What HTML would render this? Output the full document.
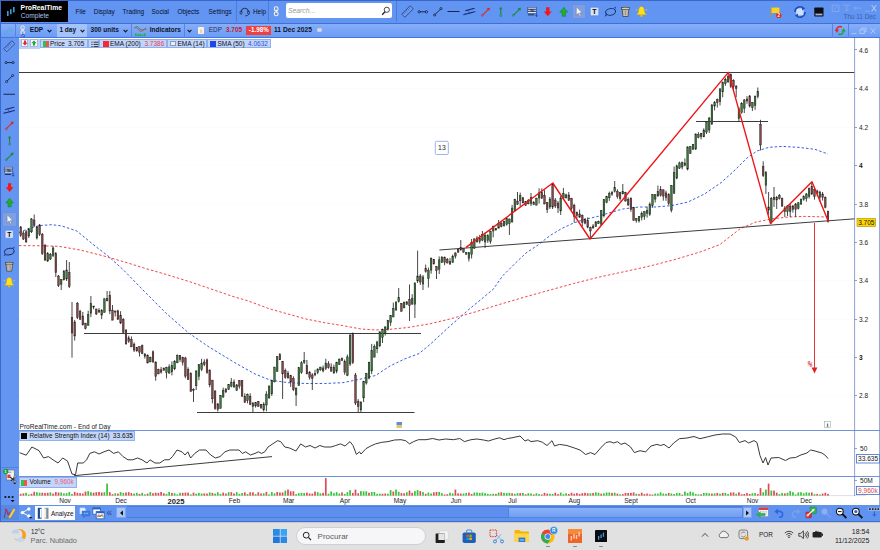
<!DOCTYPE html>
<html><head><meta charset="utf-8"><title>ProRealTime</title>
<style>
html,body{margin:0;padding:0;}
body{width:880px;height:550px;overflow:hidden;background:#fff;font-family:"Liberation Sans",sans-serif;position:relative;}
.abs{position:absolute;}
.t{position:absolute;white-space:nowrap;line-height:1;}
#menubar{left:0;top:0;width:880px;height:22.5px;background:#6294f2;}
#menubar .m{font-size:6.4px;color:#07102a;top:8.5px;}
#row2{left:0;top:22.5px;width:880px;height:15.5px;background:linear-gradient(#86aefa,#6c9cf4);border-top:1px solid #426fd4;border-bottom:1px solid #4674d8;box-sizing:border-box;}
#row2 .b{font-size:6.5px;font-weight:bold;color:#0c1428;top:3.2px;}
#side{left:0;top:38px;width:18.5px;height:468px;background:#6496f1;}
#legend{left:19px;top:38.5px;height:10.5px;}
.lg{position:absolute;top:0;height:9.6px;background:#c3d6fa;border:0.6px solid #8fb0f0;box-sizing:border-box;font-size:6.5px;color:#111;}
#bottombar{left:0;top:505px;width:880px;height:16.5px;background:#6093f0;border-bottom:1.5px solid #3f6fd0;box-sizing:border-box;}
#taskbar{left:0;top:521.5px;width:880px;height:28.5px;background:#e1e1e2;}
</style></head><body>

<svg id="chart" width="880" height="550" viewBox="0 0 880 550" style="position:absolute;left:0;top:0" font-family="Liberation Sans, sans-serif">
<!-- faint grid -->
<g stroke="#fcfcfe" stroke-width="1">
<line x1="19" y1="49.5" x2="854" y2="49.5"/><line x1="19" y1="88.5" x2="854" y2="88.5"/><line x1="19" y1="127.5" x2="854" y2="127.5"/>
<line x1="19" y1="165.5" x2="854" y2="165.5"/><line x1="19" y1="204.5" x2="854" y2="204.5"/><line x1="19" y1="242.5" x2="854" y2="242.5"/>
<line x1="19" y1="280.5" x2="854" y2="280.5"/><line x1="19" y1="319.5" x2="854" y2="319.5"/><line x1="19" y1="357.5" x2="854" y2="357.5"/><line x1="19" y1="395.5" x2="854" y2="395.5"/>
</g>
<!-- moving averages -->
<polyline points="19.0,232.5 30.0,228.0 40.0,225.5 52.0,224.7 62.0,226.0 76.8,231.0 95.0,246.0 107.7,255.6 123.0,269.5 143.0,290.0 165.8,313.0 188.7,333.0 209.0,347.0 234.5,362.5 255.0,374.0 270.0,380.0 288.0,382.7 306.0,383.5 324.5,383.5 342.7,382.7 361.0,379.0 375.5,375.5 390.0,366.0 404.5,359.0 419.0,353.6 430.0,344.5 450.0,326.0 470.0,308.5 493.0,289.5 502.7,275.8 514.5,264.0 526.0,253.0 538.0,245.0 550.0,235.6 561.7,228.5 573.6,223.0 585.0,219.3 599.5,216.0 606.0,213.8 622.7,209.0 639.0,207.0 655.0,207.0 671.8,205.6 688.0,202.0 704.5,194.0 721.0,182.7 734.0,171.0 747.0,158.0 757.0,151.0 769.0,147.3 782.5,146.4 799.0,147.4 815.0,149.3 828.0,154.0" fill="none" stroke="#3a5fe0" stroke-width="1" stroke-dasharray="2.5,2"/>
<polyline points="19.0,245.6 40.0,245.8 58.7,246.3 80.0,250.0 102.0,255.5 123.0,261.5 146.0,268.6 168.0,275.0 189.7,281.7 214.0,290.0 233.0,296.5 247.0,300.5 270.0,309.0 288.0,314.0 306.0,319.0 324.5,322.7 342.7,325.6 361.0,329.0 375.5,330.0 390.0,329.3 408.0,327.5 430.0,323.8 450.0,319.0 475.0,312.0 500.0,304.3 525.0,297.0 552.0,289.5 573.6,283.5 599.5,277.0 625.0,271.5 650.0,266.0 675.0,259.5 700.0,252.0 720.0,244.5 740.0,228.8 756.0,222.0 772.7,218.7 789.0,217.0 805.0,216.4 828.0,217.0" fill="none" stroke="#f04848" stroke-width="1" stroke-dasharray="2.5,2"/>
<!-- horizontal lines -->
<g stroke="#3c3c3c" stroke-width="1">
<line x1="19" y1="72.5" x2="854.5" y2="72.5"/>
<line x1="84" y1="333.5" x2="421" y2="333.5"/>
<line x1="197" y1="412.5" x2="414.5" y2="412.5"/>
<line x1="696" y1="121.5" x2="768" y2="121.5"/>
<line x1="439.4" y1="250" x2="855" y2="218.8"/>
<line x1="73.9" y1="475.7" x2="272" y2="456.6"/>
</g>
<!-- candles -->
<line x1="20.7" y1="226.0" x2="20.7" y2="237.0" stroke="#333" stroke-width="0.9"/>
<rect x="19.90" y="227.0" width="1.6" height="8.5" fill="#8a4545" stroke="#1a1a1a" stroke-width="0.45"/>
<line x1="23.4" y1="231.0" x2="23.4" y2="240.0" stroke="#333" stroke-width="0.9"/>
<rect x="22.60" y="233.0" width="1.6" height="6.0" fill="#8a4545" stroke="#1a1a1a" stroke-width="0.45"/>
<line x1="26.1" y1="230.0" x2="26.1" y2="243.0" stroke="#333" stroke-width="0.9"/>
<rect x="25.30" y="231.8" width="1.6" height="10.0" fill="#8a4545" stroke="#1a1a1a" stroke-width="0.45"/>
<line x1="28.8" y1="228.0" x2="28.8" y2="238.0" stroke="#333" stroke-width="0.9"/>
<rect x="28.00" y="229.0" width="1.6" height="7.0" fill="#3a7a3a" stroke="#1a1a1a" stroke-width="0.45"/>
<line x1="31.5" y1="218.0" x2="31.5" y2="233.0" stroke="#333" stroke-width="0.9"/>
<rect x="30.70" y="219.0" width="1.6" height="12.8" fill="#3a7a3a" stroke="#1a1a1a" stroke-width="0.45"/>
<line x1="34.2" y1="214.5" x2="34.2" y2="227.0" stroke="#333" stroke-width="0.9"/>
<rect x="33.40" y="220.0" width="1.6" height="5.5" fill="#8a4545" stroke="#1a1a1a" stroke-width="0.45"/>
<line x1="36.9" y1="226.0" x2="36.9" y2="239.5" stroke="#333" stroke-width="0.9"/>
<rect x="36.10" y="227.0" width="1.6" height="11.0" fill="#3a7a3a" stroke="#1a1a1a" stroke-width="0.45"/>
<line x1="39.6" y1="224.0" x2="39.6" y2="236.0" stroke="#333" stroke-width="0.9"/>
<rect x="38.80" y="225.0" width="1.6" height="9.5" fill="#8a4545" stroke="#1a1a1a" stroke-width="0.45"/>
<line x1="42.3" y1="233.0" x2="42.3" y2="255.0" stroke="#333" stroke-width="0.9"/>
<rect x="41.50" y="234.5" width="1.6" height="19.1" fill="#8a4545" stroke="#1a1a1a" stroke-width="0.45"/>
<line x1="45.0" y1="244.0" x2="45.0" y2="261.0" stroke="#333" stroke-width="0.9"/>
<rect x="44.20" y="245.5" width="1.6" height="14.5" fill="#8a4545" stroke="#1a1a1a" stroke-width="0.45"/>
<line x1="47.7" y1="252.0" x2="47.7" y2="262.0" stroke="#333" stroke-width="0.9"/>
<rect x="46.90" y="253.6" width="1.6" height="7.4" fill="#3a7a3a" stroke="#1a1a1a" stroke-width="0.45"/>
<line x1="50.4" y1="253.0" x2="50.4" y2="260.0" stroke="#333" stroke-width="0.9"/>
<rect x="49.60" y="254.5" width="1.6" height="4.5" fill="#3a7a3a" stroke="#1a1a1a" stroke-width="0.45"/>
<line x1="53.1" y1="246.0" x2="53.1" y2="257.0" stroke="#333" stroke-width="0.9"/>
<rect x="52.30" y="248.0" width="1.6" height="7.5" fill="#3a7a3a" stroke="#1a1a1a" stroke-width="0.45"/>
<line x1="55.8" y1="252.0" x2="55.8" y2="277.0" stroke="#333" stroke-width="0.9"/>
<rect x="55.00" y="253.6" width="1.6" height="19.1" fill="#8a4545" stroke="#1a1a1a" stroke-width="0.45"/>
<line x1="58.5" y1="275.0" x2="58.5" y2="287.0" stroke="#333" stroke-width="0.9"/>
<rect x="57.70" y="276.0" width="1.6" height="9.5" fill="#8a4545" stroke="#1a1a1a" stroke-width="0.45"/>
<line x1="61.2" y1="279.4" x2="61.2" y2="290.0" stroke="#333" stroke-width="0.9"/>
<rect x="60.40" y="279.4" width="1.6" height="4.9" fill="#3a7a3a" stroke="#1a1a1a" stroke-width="0.45"/>
<line x1="63.9" y1="270.0" x2="63.9" y2="280.1" stroke="#333" stroke-width="0.9"/>
<rect x="63.10" y="271.1" width="1.6" height="8.9" fill="#3a7a3a" stroke="#1a1a1a" stroke-width="0.45"/>
<line x1="66.6" y1="260.0" x2="66.6" y2="281.0" stroke="#333" stroke-width="0.9"/>
<rect x="65.80" y="270.0" width="1.6" height="9.0" fill="#3a7a3a" stroke="#1a1a1a" stroke-width="0.45"/>
<line x1="69.3" y1="262.0" x2="69.3" y2="288.0" stroke="#333" stroke-width="0.9"/>
<rect x="68.50" y="272.6" width="1.6" height="13.9" fill="#8a4545" stroke="#1a1a1a" stroke-width="0.45"/>
<line x1="72.0" y1="302.0" x2="72.0" y2="357.6" stroke="#333" stroke-width="0.9"/>
<rect x="71.20" y="317.4" width="1.6" height="15.6" fill="#8a4545" stroke="#1a1a1a" stroke-width="0.45"/>
<line x1="74.7" y1="320.0" x2="74.7" y2="340.6" stroke="#333" stroke-width="0.9"/>
<rect x="73.90" y="322.0" width="1.6" height="14.0" fill="#8a4545" stroke="#1a1a1a" stroke-width="0.45"/>
<line x1="77.4" y1="302.0" x2="77.4" y2="319.0" stroke="#333" stroke-width="0.9"/>
<rect x="76.60" y="303.5" width="1.6" height="13.9" fill="#8a4545" stroke="#1a1a1a" stroke-width="0.45"/>
<line x1="80.1" y1="309.8" x2="80.1" y2="319.5" stroke="#333" stroke-width="0.9"/>
<rect x="79.30" y="311.2" width="1.6" height="8.2" fill="#8a4545" stroke="#1a1a1a" stroke-width="0.45"/>
<line x1="82.8" y1="311.9" x2="82.8" y2="325.5" stroke="#333" stroke-width="0.9"/>
<rect x="82.00" y="316.0" width="1.6" height="8.8" fill="#8a4545" stroke="#1a1a1a" stroke-width="0.45"/>
<line x1="85.5" y1="323.0" x2="85.5" y2="329.4" stroke="#333" stroke-width="0.9"/>
<rect x="84.70" y="323.1" width="1.6" height="5.2" fill="#8a4545" stroke="#1a1a1a" stroke-width="0.45"/>
<line x1="88.2" y1="310.7" x2="88.2" y2="325.4" stroke="#333" stroke-width="0.9"/>
<rect x="87.40" y="314.6" width="1.6" height="10.7" fill="#3a7a3a" stroke="#1a1a1a" stroke-width="0.45"/>
<line x1="90.9" y1="296.0" x2="90.9" y2="317.1" stroke="#333" stroke-width="0.9"/>
<rect x="90.10" y="303.6" width="1.6" height="9.6" fill="#3a7a3a" stroke="#1a1a1a" stroke-width="0.45"/>
<line x1="93.6" y1="305.8" x2="93.6" y2="309.3" stroke="#333" stroke-width="0.9"/>
<rect x="92.80" y="306.0" width="1.6" height="1.1" fill="#3a7a3a" stroke="#1a1a1a" stroke-width="0.45"/>
<line x1="96.3" y1="308.7" x2="96.3" y2="315.0" stroke="#333" stroke-width="0.9"/>
<rect x="95.50" y="309.0" width="1.6" height="5.0" fill="#8a4545" stroke="#1a1a1a" stroke-width="0.45"/>
<line x1="99.0" y1="308.0" x2="99.0" y2="312.6" stroke="#333" stroke-width="0.9"/>
<rect x="98.20" y="310.5" width="1.6" height="1.6" fill="#8a4545" stroke="#1a1a1a" stroke-width="0.45"/>
<line x1="101.7" y1="309.1" x2="101.7" y2="319.1" stroke="#333" stroke-width="0.9"/>
<rect x="100.90" y="310.2" width="1.6" height="4.9" fill="#3a7a3a" stroke="#1a1a1a" stroke-width="0.45"/>
<line x1="104.4" y1="298.3" x2="104.4" y2="312.5" stroke="#333" stroke-width="0.9"/>
<rect x="103.60" y="298.8" width="1.6" height="13.5" fill="#3a7a3a" stroke="#1a1a1a" stroke-width="0.45"/>
<line x1="107.1" y1="291.0" x2="107.1" y2="301.4" stroke="#333" stroke-width="0.9"/>
<rect x="106.30" y="298.5" width="1.6" height="2.3" fill="#3a7a3a" stroke="#1a1a1a" stroke-width="0.45"/>
<line x1="109.8" y1="291.0" x2="109.8" y2="314.1" stroke="#333" stroke-width="0.9"/>
<rect x="109.00" y="295.2" width="1.6" height="15.8" fill="#8a4545" stroke="#1a1a1a" stroke-width="0.45"/>
<line x1="112.5" y1="305.0" x2="112.5" y2="320.3" stroke="#333" stroke-width="0.9"/>
<rect x="111.70" y="310.1" width="1.6" height="10.0" fill="#8a4545" stroke="#1a1a1a" stroke-width="0.45"/>
<line x1="115.2" y1="310.7" x2="115.2" y2="316.5" stroke="#333" stroke-width="0.9"/>
<rect x="114.40" y="311.0" width="1.6" height="1.1" fill="#8a4545" stroke="#1a1a1a" stroke-width="0.45"/>
<line x1="117.9" y1="309.8" x2="117.9" y2="320.0" stroke="#333" stroke-width="0.9"/>
<rect x="117.10" y="310.8" width="1.6" height="8.4" fill="#8a4545" stroke="#1a1a1a" stroke-width="0.45"/>
<line x1="120.6" y1="311.2" x2="120.6" y2="324.1" stroke="#333" stroke-width="0.9"/>
<rect x="119.80" y="315.2" width="1.6" height="7.8" fill="#8a4545" stroke="#1a1a1a" stroke-width="0.45"/>
<line x1="123.3" y1="318.1" x2="123.3" y2="333.2" stroke="#333" stroke-width="0.9"/>
<rect x="122.50" y="319.5" width="1.6" height="12.7" fill="#8a4545" stroke="#1a1a1a" stroke-width="0.45"/>
<line x1="126.0" y1="329.3" x2="126.0" y2="344.4" stroke="#333" stroke-width="0.9"/>
<rect x="125.20" y="330.0" width="1.6" height="14.0" fill="#8a4545" stroke="#1a1a1a" stroke-width="0.45"/>
<line x1="128.7" y1="335.7" x2="128.7" y2="342.8" stroke="#333" stroke-width="0.9"/>
<rect x="127.90" y="337.8" width="1.6" height="3.7" fill="#8a4545" stroke="#1a1a1a" stroke-width="0.45"/>
<line x1="131.4" y1="336.4" x2="131.4" y2="347.2" stroke="#333" stroke-width="0.9"/>
<rect x="130.60" y="339.5" width="1.6" height="7.3" fill="#8a4545" stroke="#1a1a1a" stroke-width="0.45"/>
<line x1="134.1" y1="342.4" x2="134.1" y2="352.0" stroke="#333" stroke-width="0.9"/>
<rect x="133.30" y="344.1" width="1.6" height="5.9" fill="#8a4545" stroke="#1a1a1a" stroke-width="0.45"/>
<line x1="136.8" y1="347.2" x2="136.8" y2="351.7" stroke="#333" stroke-width="0.9"/>
<rect x="136.00" y="347.2" width="1.6" height="3.7" fill="#8a4545" stroke="#1a1a1a" stroke-width="0.45"/>
<line x1="139.5" y1="346.4" x2="139.5" y2="356.5" stroke="#333" stroke-width="0.9"/>
<rect x="138.70" y="346.7" width="1.6" height="5.4" fill="#8a4545" stroke="#1a1a1a" stroke-width="0.45"/>
<line x1="142.2" y1="344.5" x2="142.2" y2="354.2" stroke="#333" stroke-width="0.9"/>
<rect x="141.40" y="345.7" width="1.6" height="8.0" fill="#8a4545" stroke="#1a1a1a" stroke-width="0.45"/>
<line x1="144.9" y1="353.7" x2="144.9" y2="358.6" stroke="#333" stroke-width="0.9"/>
<rect x="144.10" y="353.8" width="1.6" height="2.4" fill="#3a7a3a" stroke="#1a1a1a" stroke-width="0.45"/>
<line x1="147.6" y1="354.5" x2="147.6" y2="363.2" stroke="#333" stroke-width="0.9"/>
<rect x="146.80" y="355.1" width="1.6" height="7.9" fill="#8a4545" stroke="#1a1a1a" stroke-width="0.45"/>
<line x1="150.3" y1="356.6" x2="150.3" y2="362.2" stroke="#333" stroke-width="0.9"/>
<rect x="149.50" y="357.4" width="1.6" height="4.5" fill="#3a7a3a" stroke="#1a1a1a" stroke-width="0.45"/>
<line x1="153.0" y1="350.4" x2="153.0" y2="362.3" stroke="#333" stroke-width="0.9"/>
<rect x="152.20" y="351.8" width="1.6" height="10.3" fill="#8a4545" stroke="#1a1a1a" stroke-width="0.45"/>
<line x1="155.7" y1="361.8" x2="155.7" y2="380.7" stroke="#333" stroke-width="0.9"/>
<rect x="154.90" y="361.9" width="1.6" height="14.4" fill="#8a4545" stroke="#1a1a1a" stroke-width="0.45"/>
<line x1="158.4" y1="368.7" x2="158.4" y2="374.2" stroke="#333" stroke-width="0.9"/>
<rect x="157.60" y="369.5" width="1.6" height="4.4" fill="#8a4545" stroke="#1a1a1a" stroke-width="0.45"/>
<line x1="161.1" y1="366.9" x2="161.1" y2="373.6" stroke="#333" stroke-width="0.9"/>
<rect x="160.30" y="369.8" width="1.6" height="2.3" fill="#8a4545" stroke="#1a1a1a" stroke-width="0.45"/>
<line x1="163.8" y1="367.8" x2="163.8" y2="370.5" stroke="#333" stroke-width="0.9"/>
<rect x="163.00" y="368.0" width="1.6" height="2.4" fill="#8a4545" stroke="#1a1a1a" stroke-width="0.45"/>
<line x1="166.5" y1="366.7" x2="166.5" y2="378.4" stroke="#333" stroke-width="0.9"/>
<rect x="165.70" y="367.5" width="1.6" height="4.8" fill="#3a7a3a" stroke="#1a1a1a" stroke-width="0.45"/>
<line x1="169.2" y1="364.3" x2="169.2" y2="373.6" stroke="#333" stroke-width="0.9"/>
<rect x="168.40" y="366.9" width="1.6" height="6.2" fill="#3a7a3a" stroke="#1a1a1a" stroke-width="0.45"/>
<line x1="171.9" y1="361.4" x2="171.9" y2="375.4" stroke="#333" stroke-width="0.9"/>
<rect x="171.10" y="365.7" width="1.6" height="6.2" fill="#3a7a3a" stroke="#1a1a1a" stroke-width="0.45"/>
<line x1="174.6" y1="360.1" x2="174.6" y2="370.2" stroke="#333" stroke-width="0.9"/>
<rect x="173.80" y="361.5" width="1.6" height="7.3" fill="#3a7a3a" stroke="#1a1a1a" stroke-width="0.45"/>
<line x1="177.3" y1="354.5" x2="177.3" y2="363.2" stroke="#333" stroke-width="0.9"/>
<rect x="176.50" y="355.2" width="1.6" height="7.6" fill="#3a7a3a" stroke="#1a1a1a" stroke-width="0.45"/>
<line x1="180.0" y1="355.1" x2="180.0" y2="361.9" stroke="#333" stroke-width="0.9"/>
<rect x="179.20" y="355.4" width="1.6" height="4.1" fill="#8a4545" stroke="#1a1a1a" stroke-width="0.45"/>
<line x1="182.7" y1="357.0" x2="182.7" y2="365.5" stroke="#333" stroke-width="0.9"/>
<rect x="181.90" y="357.1" width="1.6" height="5.3" fill="#8a4545" stroke="#1a1a1a" stroke-width="0.45"/>
<line x1="185.4" y1="356.8" x2="185.4" y2="378.3" stroke="#333" stroke-width="0.9"/>
<rect x="184.60" y="358.0" width="1.6" height="18.1" fill="#8a4545" stroke="#1a1a1a" stroke-width="0.45"/>
<line x1="188.1" y1="367.3" x2="188.1" y2="379.7" stroke="#333" stroke-width="0.9"/>
<rect x="187.30" y="369.7" width="1.6" height="9.9" fill="#8a4545" stroke="#1a1a1a" stroke-width="0.45"/>
<line x1="190.8" y1="372.3" x2="190.8" y2="391.6" stroke="#333" stroke-width="0.9"/>
<rect x="190.00" y="373.3" width="1.6" height="18.3" fill="#8a4545" stroke="#1a1a1a" stroke-width="0.45"/>
<line x1="193.5" y1="388.3" x2="193.5" y2="402.0" stroke="#333" stroke-width="0.9"/>
<rect x="192.70" y="389.3" width="1.6" height="1.0" fill="#8a4545" stroke="#1a1a1a" stroke-width="0.45"/>
<line x1="196.2" y1="370.2" x2="196.2" y2="390.0" stroke="#333" stroke-width="0.9"/>
<rect x="195.40" y="371.0" width="1.6" height="14.8" fill="#3a7a3a" stroke="#1a1a1a" stroke-width="0.45"/>
<line x1="198.9" y1="364.3" x2="198.9" y2="380.2" stroke="#333" stroke-width="0.9"/>
<rect x="198.10" y="364.4" width="1.6" height="12.1" fill="#3a7a3a" stroke="#1a1a1a" stroke-width="0.45"/>
<line x1="201.6" y1="358.8" x2="201.6" y2="371.1" stroke="#333" stroke-width="0.9"/>
<rect x="200.80" y="363.1" width="1.6" height="6.5" fill="#3a7a3a" stroke="#1a1a1a" stroke-width="0.45"/>
<line x1="204.3" y1="359.3" x2="204.3" y2="366.3" stroke="#333" stroke-width="0.9"/>
<rect x="203.50" y="362.0" width="1.6" height="2.4" fill="#8a4545" stroke="#1a1a1a" stroke-width="0.45"/>
<line x1="207.0" y1="358.5" x2="207.0" y2="373.8" stroke="#333" stroke-width="0.9"/>
<rect x="206.20" y="359.9" width="1.6" height="12.6" fill="#8a4545" stroke="#1a1a1a" stroke-width="0.45"/>
<line x1="209.7" y1="369.6" x2="209.7" y2="387.3" stroke="#333" stroke-width="0.9"/>
<rect x="208.90" y="370.0" width="1.6" height="14.8" fill="#8a4545" stroke="#1a1a1a" stroke-width="0.45"/>
<line x1="212.4" y1="380.0" x2="212.4" y2="403.3" stroke="#333" stroke-width="0.9"/>
<rect x="211.60" y="380.1" width="1.6" height="18.7" fill="#8a4545" stroke="#1a1a1a" stroke-width="0.45"/>
<line x1="215.1" y1="390.5" x2="215.1" y2="409.8" stroke="#333" stroke-width="0.9"/>
<rect x="214.30" y="390.9" width="1.6" height="17.5" fill="#8a4545" stroke="#1a1a1a" stroke-width="0.45"/>
<line x1="217.8" y1="403.3" x2="217.8" y2="411.6" stroke="#333" stroke-width="0.9"/>
<rect x="217.00" y="403.8" width="1.6" height="5.5" fill="#8a4545" stroke="#1a1a1a" stroke-width="0.45"/>
<line x1="220.5" y1="395.0" x2="220.5" y2="408.5" stroke="#333" stroke-width="0.9"/>
<rect x="219.70" y="395.6" width="1.6" height="12.7" fill="#3a7a3a" stroke="#1a1a1a" stroke-width="0.45"/>
<line x1="223.2" y1="387.6" x2="223.2" y2="397.5" stroke="#333" stroke-width="0.9"/>
<rect x="222.40" y="390.3" width="1.6" height="6.8" fill="#3a7a3a" stroke="#1a1a1a" stroke-width="0.45"/>
<line x1="225.9" y1="388.4" x2="225.9" y2="393.1" stroke="#333" stroke-width="0.9"/>
<rect x="225.10" y="388.9" width="1.6" height="3.0" fill="#8a4545" stroke="#1a1a1a" stroke-width="0.45"/>
<line x1="228.6" y1="384.2" x2="228.6" y2="390.0" stroke="#333" stroke-width="0.9"/>
<rect x="227.80" y="384.3" width="1.6" height="5.2" fill="#3a7a3a" stroke="#1a1a1a" stroke-width="0.45"/>
<line x1="231.3" y1="378.0" x2="231.3" y2="387.3" stroke="#333" stroke-width="0.9"/>
<rect x="230.50" y="382.1" width="1.6" height="4.1" fill="#3a7a3a" stroke="#1a1a1a" stroke-width="0.45"/>
<line x1="234.0" y1="379.4" x2="234.0" y2="387.7" stroke="#333" stroke-width="0.9"/>
<rect x="233.20" y="382.0" width="1.6" height="5.0" fill="#8a4545" stroke="#1a1a1a" stroke-width="0.45"/>
<line x1="236.7" y1="384.1" x2="236.7" y2="390.9" stroke="#333" stroke-width="0.9"/>
<rect x="235.90" y="384.9" width="1.6" height="5.5" fill="#3a7a3a" stroke="#1a1a1a" stroke-width="0.45"/>
<line x1="239.4" y1="380.0" x2="239.4" y2="388.7" stroke="#333" stroke-width="0.9"/>
<rect x="238.60" y="380.6" width="1.6" height="5.5" fill="#8a4545" stroke="#1a1a1a" stroke-width="0.45"/>
<line x1="242.1" y1="380.0" x2="242.1" y2="396.4" stroke="#333" stroke-width="0.9"/>
<rect x="241.30" y="380.6" width="1.6" height="15.7" fill="#8a4545" stroke="#1a1a1a" stroke-width="0.45"/>
<line x1="244.8" y1="393.3" x2="244.8" y2="402.8" stroke="#333" stroke-width="0.9"/>
<rect x="244.00" y="396.2" width="1.6" height="6.2" fill="#8a4545" stroke="#1a1a1a" stroke-width="0.45"/>
<line x1="247.5" y1="393.5" x2="247.5" y2="403.3" stroke="#333" stroke-width="0.9"/>
<rect x="246.70" y="394.5" width="1.6" height="6.2" fill="#3a7a3a" stroke="#1a1a1a" stroke-width="0.45"/>
<line x1="250.2" y1="393.3" x2="250.2" y2="405.0" stroke="#333" stroke-width="0.9"/>
<rect x="249.40" y="396.2" width="1.6" height="8.3" fill="#8a4545" stroke="#1a1a1a" stroke-width="0.45"/>
<line x1="252.9" y1="402.5" x2="252.9" y2="412.0" stroke="#333" stroke-width="0.9"/>
<rect x="252.10" y="402.9" width="1.6" height="3.8" fill="#8a4545" stroke="#1a1a1a" stroke-width="0.45"/>
<line x1="255.6" y1="402.0" x2="255.6" y2="407.6" stroke="#333" stroke-width="0.9"/>
<rect x="254.80" y="402.7" width="1.6" height="3.2" fill="#3a7a3a" stroke="#1a1a1a" stroke-width="0.45"/>
<line x1="258.3" y1="401.1" x2="258.3" y2="406.8" stroke="#333" stroke-width="0.9"/>
<rect x="257.50" y="401.4" width="1.6" height="5.0" fill="#8a4545" stroke="#1a1a1a" stroke-width="0.45"/>
<line x1="261.0" y1="403.9" x2="261.0" y2="409.0" stroke="#333" stroke-width="0.9"/>
<rect x="260.20" y="404.5" width="1.6" height="3.2" fill="#8a4545" stroke="#1a1a1a" stroke-width="0.45"/>
<line x1="263.7" y1="402.2" x2="263.7" y2="411.6" stroke="#333" stroke-width="0.9"/>
<rect x="262.90" y="404.1" width="1.6" height="5.7" fill="#3a7a3a" stroke="#1a1a1a" stroke-width="0.45"/>
<line x1="266.4" y1="391.2" x2="266.4" y2="411.3" stroke="#333" stroke-width="0.9"/>
<rect x="265.60" y="394.1" width="1.6" height="10.9" fill="#3a7a3a" stroke="#1a1a1a" stroke-width="0.45"/>
<line x1="269.1" y1="385.9" x2="269.1" y2="398.8" stroke="#333" stroke-width="0.9"/>
<rect x="268.30" y="385.9" width="1.6" height="12.0" fill="#3a7a3a" stroke="#1a1a1a" stroke-width="0.45"/>
<line x1="271.8" y1="380.0" x2="271.8" y2="396.0" stroke="#333" stroke-width="0.9"/>
<rect x="271.00" y="380.3" width="1.6" height="13.5" fill="#3a7a3a" stroke="#1a1a1a" stroke-width="0.45"/>
<line x1="274.5" y1="366.9" x2="274.5" y2="382.4" stroke="#333" stroke-width="0.9"/>
<rect x="273.70" y="367.1" width="1.6" height="14.7" fill="#3a7a3a" stroke="#1a1a1a" stroke-width="0.45"/>
<line x1="277.2" y1="356.5" x2="277.2" y2="371.9" stroke="#333" stroke-width="0.9"/>
<rect x="276.40" y="356.5" width="1.6" height="14.8" fill="#3a7a3a" stroke="#1a1a1a" stroke-width="0.45"/>
<line x1="279.9" y1="353.0" x2="279.9" y2="359.8" stroke="#333" stroke-width="0.9"/>
<rect x="279.10" y="354.7" width="1.6" height="5.1" fill="#8a4545" stroke="#1a1a1a" stroke-width="0.45"/>
<line x1="282.6" y1="361.1" x2="282.6" y2="399.0" stroke="#333" stroke-width="0.9"/>
<rect x="281.80" y="361.3" width="1.6" height="12.5" fill="#8a4545" stroke="#1a1a1a" stroke-width="0.45"/>
<line x1="285.3" y1="368.5" x2="285.3" y2="378.8" stroke="#333" stroke-width="0.9"/>
<rect x="284.50" y="370.5" width="1.6" height="6.7" fill="#8a4545" stroke="#1a1a1a" stroke-width="0.45"/>
<line x1="288.0" y1="370.9" x2="288.0" y2="378.6" stroke="#333" stroke-width="0.9"/>
<rect x="287.20" y="373.1" width="1.6" height="4.8" fill="#8a4545" stroke="#1a1a1a" stroke-width="0.45"/>
<line x1="290.7" y1="374.9" x2="290.7" y2="386.9" stroke="#333" stroke-width="0.9"/>
<rect x="289.90" y="375.7" width="1.6" height="6.5" fill="#8a4545" stroke="#1a1a1a" stroke-width="0.45"/>
<line x1="293.4" y1="376.3" x2="293.4" y2="391.1" stroke="#333" stroke-width="0.9"/>
<rect x="292.60" y="378.6" width="1.6" height="11.0" fill="#8a4545" stroke="#1a1a1a" stroke-width="0.45"/>
<line x1="296.1" y1="387.6" x2="296.1" y2="406.0" stroke="#333" stroke-width="0.9"/>
<rect x="295.30" y="388.0" width="1.6" height="6.9" fill="#3a7a3a" stroke="#1a1a1a" stroke-width="0.45"/>
<line x1="298.8" y1="367.4" x2="298.8" y2="385.9" stroke="#333" stroke-width="0.9"/>
<rect x="298.00" y="367.6" width="1.6" height="18.1" fill="#3a7a3a" stroke="#1a1a1a" stroke-width="0.45"/>
<line x1="301.5" y1="361.2" x2="301.5" y2="373.8" stroke="#333" stroke-width="0.9"/>
<rect x="300.70" y="362.8" width="1.6" height="9.5" fill="#3a7a3a" stroke="#1a1a1a" stroke-width="0.45"/>
<line x1="304.2" y1="352.0" x2="304.2" y2="364.0" stroke="#333" stroke-width="0.9"/>
<rect x="303.40" y="360.4" width="1.6" height="2.3" fill="#3a7a3a" stroke="#1a1a1a" stroke-width="0.45"/>
<line x1="306.9" y1="359.9" x2="306.9" y2="374.4" stroke="#333" stroke-width="0.9"/>
<rect x="306.10" y="365.5" width="1.6" height="8.3" fill="#8a4545" stroke="#1a1a1a" stroke-width="0.45"/>
<line x1="309.6" y1="371.1" x2="309.6" y2="379.6" stroke="#333" stroke-width="0.9"/>
<rect x="308.80" y="372.1" width="1.6" height="5.3" fill="#8a4545" stroke="#1a1a1a" stroke-width="0.45"/>
<line x1="312.3" y1="373.2" x2="312.3" y2="390.0" stroke="#333" stroke-width="0.9"/>
<rect x="311.50" y="374.9" width="1.6" height="3.5" fill="#8a4545" stroke="#1a1a1a" stroke-width="0.45"/>
<line x1="315.0" y1="369.8" x2="315.0" y2="376.2" stroke="#333" stroke-width="0.9"/>
<rect x="314.20" y="373.7" width="1.6" height="1.2" fill="#8a4545" stroke="#1a1a1a" stroke-width="0.45"/>
<line x1="317.7" y1="368.5" x2="317.7" y2="374.2" stroke="#333" stroke-width="0.9"/>
<rect x="316.90" y="369.0" width="1.6" height="3.7" fill="#3a7a3a" stroke="#1a1a1a" stroke-width="0.45"/>
<line x1="320.4" y1="366.8" x2="320.4" y2="370.9" stroke="#333" stroke-width="0.9"/>
<rect x="319.60" y="367.1" width="1.6" height="2.7" fill="#3a7a3a" stroke="#1a1a1a" stroke-width="0.45"/>
<line x1="323.1" y1="365.5" x2="323.1" y2="372.3" stroke="#333" stroke-width="0.9"/>
<rect x="322.30" y="368.0" width="1.6" height="2.9" fill="#8a4545" stroke="#1a1a1a" stroke-width="0.45"/>
<line x1="325.8" y1="358.7" x2="325.8" y2="370.1" stroke="#333" stroke-width="0.9"/>
<rect x="325.00" y="363.1" width="1.6" height="5.3" fill="#3a7a3a" stroke="#1a1a1a" stroke-width="0.45"/>
<line x1="328.5" y1="361.2" x2="328.5" y2="368.7" stroke="#333" stroke-width="0.9"/>
<rect x="327.70" y="363.8" width="1.6" height="3.8" fill="#8a4545" stroke="#1a1a1a" stroke-width="0.45"/>
<line x1="331.2" y1="363.3" x2="331.2" y2="371.3" stroke="#333" stroke-width="0.9"/>
<rect x="330.40" y="367.1" width="1.6" height="4.1" fill="#8a4545" stroke="#1a1a1a" stroke-width="0.45"/>
<line x1="333.9" y1="364.6" x2="333.9" y2="373.7" stroke="#333" stroke-width="0.9"/>
<rect x="333.10" y="367.1" width="1.6" height="5.9" fill="#3a7a3a" stroke="#1a1a1a" stroke-width="0.45"/>
<line x1="336.6" y1="361.9" x2="336.6" y2="373.3" stroke="#333" stroke-width="0.9"/>
<rect x="335.80" y="362.1" width="1.6" height="9.1" fill="#3a7a3a" stroke="#1a1a1a" stroke-width="0.45"/>
<line x1="339.3" y1="358.5" x2="339.3" y2="364.7" stroke="#333" stroke-width="0.9"/>
<rect x="338.50" y="359.1" width="1.6" height="5.6" fill="#3a7a3a" stroke="#1a1a1a" stroke-width="0.45"/>
<line x1="342.0" y1="357.5" x2="342.0" y2="361.1" stroke="#333" stroke-width="0.9"/>
<rect x="341.20" y="358.6" width="1.6" height="1.7" fill="#8a4545" stroke="#1a1a1a" stroke-width="0.45"/>
<line x1="344.7" y1="359.5" x2="344.7" y2="374.8" stroke="#333" stroke-width="0.9"/>
<rect x="343.90" y="361.3" width="1.6" height="11.0" fill="#8a4545" stroke="#1a1a1a" stroke-width="0.45"/>
<line x1="347.4" y1="354.5" x2="347.4" y2="376.1" stroke="#333" stroke-width="0.9"/>
<rect x="346.60" y="356.9" width="1.6" height="18.7" fill="#3a7a3a" stroke="#1a1a1a" stroke-width="0.45"/>
<line x1="350.1" y1="334.0" x2="350.1" y2="366.0" stroke="#333" stroke-width="0.9"/>
<rect x="349.30" y="335.5" width="1.6" height="28.5" fill="#3a7a3a" stroke="#1a1a1a" stroke-width="0.45"/>
<line x1="352.8" y1="332.5" x2="352.8" y2="364.0" stroke="#333" stroke-width="0.9"/>
<rect x="352.00" y="333.6" width="1.6" height="29.1" fill="#8a4545" stroke="#1a1a1a" stroke-width="0.45"/>
<line x1="355.5" y1="373.0" x2="355.5" y2="405.0" stroke="#333" stroke-width="0.9"/>
<rect x="354.70" y="375.0" width="1.6" height="28.0" fill="#8a4545" stroke="#1a1a1a" stroke-width="0.45"/>
<line x1="358.2" y1="399.1" x2="358.2" y2="412.5" stroke="#333" stroke-width="0.9"/>
<rect x="357.40" y="401.5" width="1.6" height="5.2" fill="#8a4545" stroke="#1a1a1a" stroke-width="0.45"/>
<line x1="360.9" y1="401.7" x2="360.9" y2="412.0" stroke="#333" stroke-width="0.9"/>
<rect x="360.10" y="401.9" width="1.6" height="8.0" fill="#3a7a3a" stroke="#1a1a1a" stroke-width="0.45"/>
<line x1="363.6" y1="381.1" x2="363.6" y2="402.1" stroke="#333" stroke-width="0.9"/>
<rect x="362.80" y="381.1" width="1.6" height="16.8" fill="#3a7a3a" stroke="#1a1a1a" stroke-width="0.45"/>
<line x1="366.3" y1="372.9" x2="366.3" y2="384.6" stroke="#333" stroke-width="0.9"/>
<rect x="365.50" y="373.4" width="1.6" height="9.6" fill="#3a7a3a" stroke="#1a1a1a" stroke-width="0.45"/>
<line x1="369.0" y1="361.7" x2="369.0" y2="379.3" stroke="#333" stroke-width="0.9"/>
<rect x="368.20" y="362.3" width="1.6" height="15.8" fill="#3a7a3a" stroke="#1a1a1a" stroke-width="0.45"/>
<line x1="371.7" y1="343.9" x2="371.7" y2="374.1" stroke="#333" stroke-width="0.9"/>
<rect x="370.90" y="350.3" width="1.6" height="20.6" fill="#3a7a3a" stroke="#1a1a1a" stroke-width="0.45"/>
<line x1="374.4" y1="344.4" x2="374.4" y2="357.4" stroke="#333" stroke-width="0.9"/>
<rect x="373.60" y="346.4" width="1.6" height="10.7" fill="#3a7a3a" stroke="#1a1a1a" stroke-width="0.45"/>
<line x1="377.1" y1="340.8" x2="377.1" y2="353.1" stroke="#333" stroke-width="0.9"/>
<rect x="376.30" y="342.0" width="1.6" height="6.8" fill="#3a7a3a" stroke="#1a1a1a" stroke-width="0.45"/>
<line x1="379.8" y1="331.4" x2="379.8" y2="347.2" stroke="#333" stroke-width="0.9"/>
<rect x="379.00" y="331.8" width="1.6" height="14.0" fill="#3a7a3a" stroke="#1a1a1a" stroke-width="0.45"/>
<line x1="382.5" y1="328.6" x2="382.5" y2="343.0" stroke="#333" stroke-width="0.9"/>
<rect x="381.70" y="329.7" width="1.6" height="7.5" fill="#3a7a3a" stroke="#1a1a1a" stroke-width="0.45"/>
<line x1="385.2" y1="326.1" x2="385.2" y2="335.6" stroke="#333" stroke-width="0.9"/>
<rect x="384.40" y="327.0" width="1.6" height="6.8" fill="#3a7a3a" stroke="#1a1a1a" stroke-width="0.45"/>
<line x1="387.9" y1="320.2" x2="387.9" y2="330.5" stroke="#333" stroke-width="0.9"/>
<rect x="387.10" y="320.2" width="1.6" height="9.0" fill="#3a7a3a" stroke="#1a1a1a" stroke-width="0.45"/>
<line x1="390.6" y1="315.1" x2="390.6" y2="325.8" stroke="#333" stroke-width="0.9"/>
<rect x="389.80" y="315.7" width="1.6" height="7.0" fill="#3a7a3a" stroke="#1a1a1a" stroke-width="0.45"/>
<line x1="393.3" y1="302.6" x2="393.3" y2="317.1" stroke="#333" stroke-width="0.9"/>
<rect x="392.50" y="308.4" width="1.6" height="8.6" fill="#3a7a3a" stroke="#1a1a1a" stroke-width="0.45"/>
<line x1="396.0" y1="301.5" x2="396.0" y2="310.9" stroke="#333" stroke-width="0.9"/>
<rect x="395.20" y="302.0" width="1.6" height="8.0" fill="#3a7a3a" stroke="#1a1a1a" stroke-width="0.45"/>
<line x1="398.7" y1="288.0" x2="398.7" y2="302.6" stroke="#333" stroke-width="0.9"/>
<rect x="397.90" y="297.7" width="1.6" height="4.0" fill="#3a7a3a" stroke="#1a1a1a" stroke-width="0.45"/>
<line x1="401.4" y1="303.1" x2="401.4" y2="311.4" stroke="#333" stroke-width="0.9"/>
<rect x="400.60" y="303.3" width="1.6" height="8.0" fill="#8a4545" stroke="#1a1a1a" stroke-width="0.45"/>
<line x1="404.1" y1="301.7" x2="404.1" y2="308.4" stroke="#333" stroke-width="0.9"/>
<rect x="403.30" y="302.1" width="1.6" height="5.7" fill="#3a7a3a" stroke="#1a1a1a" stroke-width="0.45"/>
<line x1="406.8" y1="301.1" x2="406.8" y2="304.9" stroke="#333" stroke-width="0.9"/>
<rect x="406.00" y="301.9" width="1.6" height="2.5" fill="#3a7a3a" stroke="#1a1a1a" stroke-width="0.45"/>
<line x1="409.5" y1="284.5" x2="409.5" y2="321.0" stroke="#333" stroke-width="0.9"/>
<rect x="408.70" y="299.7" width="1.6" height="6.0" fill="#8a4545" stroke="#1a1a1a" stroke-width="0.45"/>
<line x1="412.2" y1="294.2" x2="412.2" y2="304.7" stroke="#333" stroke-width="0.9"/>
<rect x="411.40" y="298.7" width="1.6" height="5.4" fill="#3a7a3a" stroke="#1a1a1a" stroke-width="0.45"/>
<line x1="414.9" y1="282.0" x2="414.9" y2="318.0" stroke="#333" stroke-width="0.9"/>
<rect x="414.10" y="283.5" width="1.6" height="20.8" fill="#3a7a3a" stroke="#1a1a1a" stroke-width="0.45"/>
<line x1="417.6" y1="250.7" x2="417.6" y2="283.0" stroke="#333" stroke-width="0.9"/>
<rect x="416.80" y="276.0" width="1.6" height="5.0" fill="#3a7a3a" stroke="#1a1a1a" stroke-width="0.45"/>
<line x1="420.3" y1="274.0" x2="420.3" y2="285.0" stroke="#333" stroke-width="0.9"/>
<rect x="419.50" y="276.0" width="1.6" height="6.0" fill="#8a4545" stroke="#1a1a1a" stroke-width="0.45"/>
<line x1="423.0" y1="275.0" x2="423.0" y2="290.0" stroke="#333" stroke-width="0.9"/>
<rect x="422.20" y="277.0" width="1.6" height="7.0" fill="#3a7a3a" stroke="#1a1a1a" stroke-width="0.45"/>
<line x1="425.7" y1="264.6" x2="425.7" y2="272.7" stroke="#333" stroke-width="0.9"/>
<rect x="424.90" y="268.7" width="1.6" height="3.0" fill="#8a4545" stroke="#1a1a1a" stroke-width="0.45"/>
<line x1="428.4" y1="267.5" x2="428.4" y2="287.5" stroke="#333" stroke-width="0.9"/>
<rect x="427.60" y="270.2" width="1.6" height="8.2" fill="#3a7a3a" stroke="#1a1a1a" stroke-width="0.45"/>
<line x1="431.1" y1="257.3" x2="431.1" y2="273.7" stroke="#333" stroke-width="0.9"/>
<rect x="430.30" y="258.3" width="1.6" height="11.8" fill="#3a7a3a" stroke="#1a1a1a" stroke-width="0.45"/>
<line x1="433.8" y1="258.9" x2="433.8" y2="264.7" stroke="#333" stroke-width="0.9"/>
<rect x="433.00" y="259.4" width="1.6" height="4.4" fill="#8a4545" stroke="#1a1a1a" stroke-width="0.45"/>
<line x1="436.5" y1="266.2" x2="436.5" y2="279.0" stroke="#333" stroke-width="0.9"/>
<rect x="435.70" y="266.6" width="1.6" height="4.1" fill="#8a4545" stroke="#1a1a1a" stroke-width="0.45"/>
<line x1="439.2" y1="256.4" x2="439.2" y2="274.0" stroke="#333" stroke-width="0.9"/>
<rect x="438.40" y="259.8" width="1.6" height="9.4" fill="#3a7a3a" stroke="#1a1a1a" stroke-width="0.45"/>
<line x1="441.9" y1="256.2" x2="441.9" y2="263.0" stroke="#333" stroke-width="0.9"/>
<rect x="441.10" y="257.1" width="1.6" height="5.5" fill="#3a7a3a" stroke="#1a1a1a" stroke-width="0.45"/>
<line x1="444.6" y1="256.7" x2="444.6" y2="265.2" stroke="#333" stroke-width="0.9"/>
<rect x="443.80" y="257.1" width="1.6" height="5.3" fill="#8a4545" stroke="#1a1a1a" stroke-width="0.45"/>
<line x1="447.3" y1="258.0" x2="447.3" y2="263.3" stroke="#333" stroke-width="0.9"/>
<rect x="446.50" y="259.4" width="1.6" height="3.6" fill="#8a4545" stroke="#1a1a1a" stroke-width="0.45"/>
<line x1="450.0" y1="257.9" x2="450.0" y2="264.5" stroke="#333" stroke-width="0.9"/>
<rect x="449.20" y="261.6" width="1.6" height="2.5" fill="#8a4545" stroke="#1a1a1a" stroke-width="0.45"/>
<line x1="452.7" y1="254.5" x2="452.7" y2="263.0" stroke="#333" stroke-width="0.9"/>
<rect x="451.90" y="256.3" width="1.6" height="6.2" fill="#3a7a3a" stroke="#1a1a1a" stroke-width="0.45"/>
<line x1="455.4" y1="252.2" x2="455.4" y2="258.5" stroke="#333" stroke-width="0.9"/>
<rect x="454.60" y="253.0" width="1.6" height="3.1" fill="#8a4545" stroke="#1a1a1a" stroke-width="0.45"/>
<line x1="458.1" y1="249.1" x2="458.1" y2="252.9" stroke="#333" stroke-width="0.9"/>
<rect x="457.30" y="249.3" width="1.6" height="2.8" fill="#8a4545" stroke="#1a1a1a" stroke-width="0.45"/>
<line x1="460.8" y1="240.0" x2="460.8" y2="250.2" stroke="#333" stroke-width="0.9"/>
<rect x="460.00" y="247.3" width="1.6" height="2.8" fill="#8a4545" stroke="#1a1a1a" stroke-width="0.45"/>
<line x1="463.5" y1="248.2" x2="463.5" y2="252.6" stroke="#333" stroke-width="0.9"/>
<rect x="462.70" y="248.6" width="1.6" height="3.5" fill="#8a4545" stroke="#1a1a1a" stroke-width="0.45"/>
<line x1="466.2" y1="252.3" x2="466.2" y2="254.6" stroke="#333" stroke-width="0.9"/>
<rect x="465.40" y="252.5" width="1.6" height="1.7" fill="#3a7a3a" stroke="#1a1a1a" stroke-width="0.45"/>
<line x1="468.9" y1="252.4" x2="468.9" y2="261.5" stroke="#333" stroke-width="0.9"/>
<rect x="468.10" y="252.7" width="1.6" height="5.9" fill="#3a7a3a" stroke="#1a1a1a" stroke-width="0.45"/>
<line x1="471.6" y1="239.0" x2="471.6" y2="258.5" stroke="#333" stroke-width="0.9"/>
<rect x="470.80" y="242.3" width="1.6" height="12.2" fill="#3a7a3a" stroke="#1a1a1a" stroke-width="0.45"/>
<line x1="474.3" y1="238.4" x2="474.3" y2="248.8" stroke="#333" stroke-width="0.9"/>
<rect x="473.50" y="238.9" width="1.6" height="9.3" fill="#3a7a3a" stroke="#1a1a1a" stroke-width="0.45"/>
<line x1="477.0" y1="236.1" x2="477.0" y2="242.2" stroke="#333" stroke-width="0.9"/>
<rect x="476.20" y="238.0" width="1.6" height="4.0" fill="#3a7a3a" stroke="#1a1a1a" stroke-width="0.45"/>
<line x1="479.7" y1="234.9" x2="479.7" y2="243.5" stroke="#333" stroke-width="0.9"/>
<rect x="478.90" y="238.2" width="1.6" height="3.2" fill="#8a4545" stroke="#1a1a1a" stroke-width="0.45"/>
<line x1="482.4" y1="231.0" x2="482.4" y2="241.2" stroke="#333" stroke-width="0.9"/>
<rect x="481.60" y="234.2" width="1.6" height="5.9" fill="#3a7a3a" stroke="#1a1a1a" stroke-width="0.45"/>
<line x1="485.1" y1="232.5" x2="485.1" y2="248.1" stroke="#333" stroke-width="0.9"/>
<rect x="484.30" y="235.6" width="1.6" height="6.4" fill="#3a7a3a" stroke="#1a1a1a" stroke-width="0.45"/>
<line x1="487.8" y1="234.3" x2="487.8" y2="242.9" stroke="#333" stroke-width="0.9"/>
<rect x="487.00" y="235.7" width="1.6" height="4.7" fill="#3a7a3a" stroke="#1a1a1a" stroke-width="0.45"/>
<line x1="490.5" y1="230.6" x2="490.5" y2="243.8" stroke="#333" stroke-width="0.9"/>
<rect x="489.70" y="231.6" width="1.6" height="9.7" fill="#3a7a3a" stroke="#1a1a1a" stroke-width="0.45"/>
<line x1="493.2" y1="225.7" x2="493.2" y2="237.4" stroke="#333" stroke-width="0.9"/>
<rect x="492.40" y="226.2" width="1.6" height="4.8" fill="#3a7a3a" stroke="#1a1a1a" stroke-width="0.45"/>
<line x1="495.9" y1="228.4" x2="495.9" y2="230.3" stroke="#333" stroke-width="0.9"/>
<rect x="495.10" y="228.4" width="1.6" height="1.7" fill="#8a4545" stroke="#1a1a1a" stroke-width="0.45"/>
<line x1="498.6" y1="220.0" x2="498.6" y2="228.2" stroke="#333" stroke-width="0.9"/>
<rect x="497.80" y="223.7" width="1.6" height="4.5" fill="#3a7a3a" stroke="#1a1a1a" stroke-width="0.45"/>
<line x1="501.3" y1="222.1" x2="501.3" y2="227.3" stroke="#333" stroke-width="0.9"/>
<rect x="500.50" y="223.1" width="1.6" height="3.6" fill="#8a4545" stroke="#1a1a1a" stroke-width="0.45"/>
<line x1="504.0" y1="220.9" x2="504.0" y2="226.2" stroke="#333" stroke-width="0.9"/>
<rect x="503.20" y="221.3" width="1.6" height="4.7" fill="#3a7a3a" stroke="#1a1a1a" stroke-width="0.45"/>
<line x1="506.7" y1="218.3" x2="506.7" y2="225.7" stroke="#333" stroke-width="0.9"/>
<rect x="505.90" y="218.4" width="1.6" height="6.0" fill="#3a7a3a" stroke="#1a1a1a" stroke-width="0.45"/>
<line x1="509.4" y1="218.6" x2="509.4" y2="235.0" stroke="#333" stroke-width="0.9"/>
<rect x="508.60" y="219.0" width="1.6" height="4.7" fill="#3a7a3a" stroke="#1a1a1a" stroke-width="0.45"/>
<line x1="512.1" y1="204.9" x2="512.1" y2="222.5" stroke="#333" stroke-width="0.9"/>
<rect x="511.30" y="208.1" width="1.6" height="13.9" fill="#3a7a3a" stroke="#1a1a1a" stroke-width="0.45"/>
<line x1="514.8" y1="198.8" x2="514.8" y2="211.8" stroke="#333" stroke-width="0.9"/>
<rect x="514.00" y="199.2" width="1.6" height="11.4" fill="#3a7a3a" stroke="#1a1a1a" stroke-width="0.45"/>
<line x1="517.5" y1="192.0" x2="517.5" y2="204.9" stroke="#333" stroke-width="0.9"/>
<rect x="516.70" y="201.1" width="1.6" height="3.1" fill="#8a4545" stroke="#1a1a1a" stroke-width="0.45"/>
<line x1="520.2" y1="192.6" x2="520.2" y2="206.7" stroke="#333" stroke-width="0.9"/>
<rect x="519.40" y="195.4" width="1.6" height="5.4" fill="#3a7a3a" stroke="#1a1a1a" stroke-width="0.45"/>
<line x1="522.9" y1="196.8" x2="522.9" y2="203.4" stroke="#333" stroke-width="0.9"/>
<rect x="522.10" y="197.8" width="1.6" height="5.1" fill="#8a4545" stroke="#1a1a1a" stroke-width="0.45"/>
<line x1="525.6" y1="201.4" x2="525.6" y2="205.8" stroke="#333" stroke-width="0.9"/>
<rect x="524.80" y="201.6" width="1.6" height="3.7" fill="#8a4545" stroke="#1a1a1a" stroke-width="0.45"/>
<line x1="528.3" y1="198.9" x2="528.3" y2="204.4" stroke="#333" stroke-width="0.9"/>
<rect x="527.50" y="200.6" width="1.6" height="3.2" fill="#3a7a3a" stroke="#1a1a1a" stroke-width="0.45"/>
<line x1="531.0" y1="193.0" x2="531.0" y2="206.0" stroke="#333" stroke-width="0.9"/>
<rect x="530.20" y="197.3" width="1.6" height="6.4" fill="#3a7a3a" stroke="#1a1a1a" stroke-width="0.45"/>
<line x1="533.7" y1="201.0" x2="533.7" y2="205.0" stroke="#333" stroke-width="0.9"/>
<rect x="532.90" y="202.5" width="1.6" height="2.2" fill="#8a4545" stroke="#1a1a1a" stroke-width="0.45"/>
<line x1="536.4" y1="197.8" x2="536.4" y2="205.4" stroke="#333" stroke-width="0.9"/>
<rect x="535.60" y="198.1" width="1.6" height="7.0" fill="#3a7a3a" stroke="#1a1a1a" stroke-width="0.45"/>
<line x1="539.1" y1="188.4" x2="539.1" y2="203.6" stroke="#333" stroke-width="0.9"/>
<rect x="538.30" y="192.8" width="1.6" height="5.2" fill="#3a7a3a" stroke="#1a1a1a" stroke-width="0.45"/>
<line x1="541.8" y1="188.4" x2="541.8" y2="198.6" stroke="#333" stroke-width="0.9"/>
<rect x="541.00" y="192.7" width="1.6" height="5.7" fill="#8a4545" stroke="#1a1a1a" stroke-width="0.45"/>
<line x1="544.5" y1="190.2" x2="544.5" y2="204.3" stroke="#333" stroke-width="0.9"/>
<rect x="543.70" y="195.4" width="1.6" height="8.5" fill="#8a4545" stroke="#1a1a1a" stroke-width="0.45"/>
<line x1="547.2" y1="202.3" x2="547.2" y2="213.0" stroke="#333" stroke-width="0.9"/>
<rect x="546.40" y="202.4" width="1.6" height="7.3" fill="#8a4545" stroke="#1a1a1a" stroke-width="0.45"/>
<line x1="549.9" y1="197.0" x2="549.9" y2="209.0" stroke="#333" stroke-width="0.9"/>
<rect x="549.10" y="199.0" width="1.6" height="8.0" fill="#3a7a3a" stroke="#1a1a1a" stroke-width="0.45"/>
<line x1="552.6" y1="183.0" x2="552.6" y2="209.0" stroke="#333" stroke-width="0.9"/>
<rect x="551.80" y="184.0" width="1.6" height="23.0" fill="#8a4545" stroke="#1a1a1a" stroke-width="0.45"/>
<line x1="555.3" y1="198.0" x2="555.3" y2="208.0" stroke="#333" stroke-width="0.9"/>
<rect x="554.50" y="200.0" width="1.6" height="6.0" fill="#8a4545" stroke="#1a1a1a" stroke-width="0.45"/>
<line x1="558.0" y1="201.0" x2="558.0" y2="213.0" stroke="#333" stroke-width="0.9"/>
<rect x="557.20" y="203.0" width="1.6" height="5.0" fill="#8a4545" stroke="#1a1a1a" stroke-width="0.45"/>
<line x1="560.7" y1="196.0" x2="560.7" y2="215.0" stroke="#333" stroke-width="0.9"/>
<rect x="559.90" y="198.0" width="1.6" height="13.0" fill="#3a7a3a" stroke="#1a1a1a" stroke-width="0.45"/>
<line x1="563.4" y1="187.9" x2="563.4" y2="198.2" stroke="#333" stroke-width="0.9"/>
<rect x="562.60" y="193.2" width="1.6" height="4.9" fill="#3a7a3a" stroke="#1a1a1a" stroke-width="0.45"/>
<line x1="566.1" y1="193.8" x2="566.1" y2="198.1" stroke="#333" stroke-width="0.9"/>
<rect x="565.30" y="194.9" width="1.6" height="3.1" fill="#3a7a3a" stroke="#1a1a1a" stroke-width="0.45"/>
<line x1="568.8" y1="192.0" x2="568.8" y2="200.6" stroke="#333" stroke-width="0.9"/>
<rect x="568.00" y="195.0" width="1.6" height="5.6" fill="#8a4545" stroke="#1a1a1a" stroke-width="0.45"/>
<line x1="571.5" y1="197.9" x2="571.5" y2="209.8" stroke="#333" stroke-width="0.9"/>
<rect x="570.70" y="198.2" width="1.6" height="10.2" fill="#8a4545" stroke="#1a1a1a" stroke-width="0.45"/>
<line x1="574.2" y1="203.7" x2="574.2" y2="222.6" stroke="#333" stroke-width="0.9"/>
<rect x="573.40" y="205.2" width="1.6" height="11.5" fill="#8a4545" stroke="#1a1a1a" stroke-width="0.45"/>
<line x1="576.9" y1="211.7" x2="576.9" y2="218.4" stroke="#333" stroke-width="0.9"/>
<rect x="576.10" y="212.2" width="1.6" height="3.3" fill="#8a4545" stroke="#1a1a1a" stroke-width="0.45"/>
<line x1="579.6" y1="209.6" x2="579.6" y2="217.7" stroke="#333" stroke-width="0.9"/>
<rect x="578.80" y="214.0" width="1.6" height="3.2" fill="#8a4545" stroke="#1a1a1a" stroke-width="0.45"/>
<line x1="582.3" y1="214.5" x2="582.3" y2="226.5" stroke="#333" stroke-width="0.9"/>
<rect x="581.50" y="215.2" width="1.6" height="7.1" fill="#8a4545" stroke="#1a1a1a" stroke-width="0.45"/>
<line x1="585.0" y1="218.1" x2="585.0" y2="224.3" stroke="#333" stroke-width="0.9"/>
<rect x="584.20" y="219.7" width="1.6" height="3.4" fill="#8a4545" stroke="#1a1a1a" stroke-width="0.45"/>
<line x1="587.7" y1="217.4" x2="587.7" y2="228.4" stroke="#333" stroke-width="0.9"/>
<rect x="586.90" y="220.6" width="1.6" height="6.5" fill="#8a4545" stroke="#1a1a1a" stroke-width="0.45"/>
<line x1="590.4" y1="226.7" x2="590.4" y2="238.7" stroke="#333" stroke-width="0.9"/>
<rect x="589.60" y="227.7" width="1.6" height="3.3" fill="#8a4545" stroke="#1a1a1a" stroke-width="0.45"/>
<line x1="593.1" y1="224.1" x2="593.1" y2="229.0" stroke="#333" stroke-width="0.9"/>
<rect x="592.30" y="226.0" width="1.6" height="1.8" fill="#8a4545" stroke="#1a1a1a" stroke-width="0.45"/>
<line x1="595.8" y1="221.4" x2="595.8" y2="226.9" stroke="#333" stroke-width="0.9"/>
<rect x="595.00" y="221.8" width="1.6" height="4.9" fill="#3a7a3a" stroke="#1a1a1a" stroke-width="0.45"/>
<line x1="598.5" y1="220.6" x2="598.5" y2="223.7" stroke="#333" stroke-width="0.9"/>
<rect x="597.70" y="221.7" width="1.6" height="1.9" fill="#3a7a3a" stroke="#1a1a1a" stroke-width="0.45"/>
<line x1="601.2" y1="210.2" x2="601.2" y2="225.6" stroke="#333" stroke-width="0.9"/>
<rect x="600.40" y="210.7" width="1.6" height="13.5" fill="#3a7a3a" stroke="#1a1a1a" stroke-width="0.45"/>
<line x1="603.9" y1="199.2" x2="603.9" y2="217.4" stroke="#333" stroke-width="0.9"/>
<rect x="603.10" y="199.4" width="1.6" height="16.4" fill="#3a7a3a" stroke="#1a1a1a" stroke-width="0.45"/>
<line x1="606.6" y1="195.8" x2="606.6" y2="203.3" stroke="#333" stroke-width="0.9"/>
<rect x="605.80" y="196.6" width="1.6" height="6.1" fill="#3a7a3a" stroke="#1a1a1a" stroke-width="0.45"/>
<line x1="609.3" y1="191.6" x2="609.3" y2="200.9" stroke="#333" stroke-width="0.9"/>
<rect x="608.50" y="193.3" width="1.6" height="4.5" fill="#3a7a3a" stroke="#1a1a1a" stroke-width="0.45"/>
<line x1="612.0" y1="190.9" x2="612.0" y2="195.9" stroke="#333" stroke-width="0.9"/>
<rect x="611.20" y="192.5" width="1.6" height="1.6" fill="#8a4545" stroke="#1a1a1a" stroke-width="0.45"/>
<line x1="614.7" y1="181.0" x2="614.7" y2="192.5" stroke="#333" stroke-width="0.9"/>
<rect x="613.90" y="187.4" width="1.6" height="3.9" fill="#3a7a3a" stroke="#1a1a1a" stroke-width="0.45"/>
<line x1="617.4" y1="189.2" x2="617.4" y2="198.7" stroke="#333" stroke-width="0.9"/>
<rect x="616.60" y="191.7" width="1.6" height="5.0" fill="#8a4545" stroke="#1a1a1a" stroke-width="0.45"/>
<line x1="620.1" y1="191.8" x2="620.1" y2="200.7" stroke="#333" stroke-width="0.9"/>
<rect x="619.30" y="192.6" width="1.6" height="6.1" fill="#8a4545" stroke="#1a1a1a" stroke-width="0.45"/>
<line x1="622.8" y1="184.0" x2="622.8" y2="194.4" stroke="#333" stroke-width="0.9"/>
<rect x="622.00" y="191.4" width="1.6" height="2.4" fill="#3a7a3a" stroke="#1a1a1a" stroke-width="0.45"/>
<line x1="625.5" y1="191.8" x2="625.5" y2="201.6" stroke="#333" stroke-width="0.9"/>
<rect x="624.70" y="192.7" width="1.6" height="8.3" fill="#8a4545" stroke="#1a1a1a" stroke-width="0.45"/>
<line x1="628.2" y1="197.4" x2="628.2" y2="205.7" stroke="#333" stroke-width="0.9"/>
<rect x="627.40" y="199.4" width="1.6" height="5.6" fill="#8a4545" stroke="#1a1a1a" stroke-width="0.45"/>
<line x1="630.9" y1="197.4" x2="630.9" y2="211.8" stroke="#333" stroke-width="0.9"/>
<rect x="630.10" y="198.1" width="1.6" height="11.6" fill="#8a4545" stroke="#1a1a1a" stroke-width="0.45"/>
<line x1="633.6" y1="206.9" x2="633.6" y2="220.6" stroke="#333" stroke-width="0.9"/>
<rect x="632.80" y="207.4" width="1.6" height="13.2" fill="#8a4545" stroke="#1a1a1a" stroke-width="0.45"/>
<line x1="636.3" y1="218.3" x2="636.3" y2="222.7" stroke="#333" stroke-width="0.9"/>
<rect x="635.50" y="218.5" width="1.6" height="2.2" fill="#3a7a3a" stroke="#1a1a1a" stroke-width="0.45"/>
<line x1="639.0" y1="216.3" x2="639.0" y2="222.6" stroke="#333" stroke-width="0.9"/>
<rect x="638.20" y="216.5" width="1.6" height="4.4" fill="#3a7a3a" stroke="#1a1a1a" stroke-width="0.45"/>
<line x1="641.7" y1="211.6" x2="641.7" y2="220.4" stroke="#333" stroke-width="0.9"/>
<rect x="640.90" y="213.3" width="1.6" height="4.2" fill="#3a7a3a" stroke="#1a1a1a" stroke-width="0.45"/>
<line x1="644.4" y1="211.3" x2="644.4" y2="219.8" stroke="#333" stroke-width="0.9"/>
<rect x="643.60" y="211.7" width="1.6" height="4.5" fill="#3a7a3a" stroke="#1a1a1a" stroke-width="0.45"/>
<line x1="647.1" y1="206.6" x2="647.1" y2="217.6" stroke="#333" stroke-width="0.9"/>
<rect x="646.30" y="210.6" width="1.6" height="2.7" fill="#3a7a3a" stroke="#1a1a1a" stroke-width="0.45"/>
<line x1="649.8" y1="202.3" x2="649.8" y2="215.9" stroke="#333" stroke-width="0.9"/>
<rect x="649.00" y="204.1" width="1.6" height="10.1" fill="#3a7a3a" stroke="#1a1a1a" stroke-width="0.45"/>
<line x1="652.5" y1="194.2" x2="652.5" y2="207.7" stroke="#333" stroke-width="0.9"/>
<rect x="651.70" y="194.6" width="1.6" height="11.0" fill="#3a7a3a" stroke="#1a1a1a" stroke-width="0.45"/>
<line x1="655.2" y1="194.6" x2="655.2" y2="202.5" stroke="#333" stroke-width="0.9"/>
<rect x="654.40" y="194.6" width="1.6" height="4.5" fill="#3a7a3a" stroke="#1a1a1a" stroke-width="0.45"/>
<line x1="657.9" y1="185.5" x2="657.9" y2="196.8" stroke="#333" stroke-width="0.9"/>
<rect x="657.10" y="191.5" width="1.6" height="4.5" fill="#3a7a3a" stroke="#1a1a1a" stroke-width="0.45"/>
<line x1="660.6" y1="186.0" x2="660.6" y2="196.5" stroke="#333" stroke-width="0.9"/>
<rect x="659.80" y="189.6" width="1.6" height="5.9" fill="#8a4545" stroke="#1a1a1a" stroke-width="0.45"/>
<line x1="663.3" y1="189.5" x2="663.3" y2="200.7" stroke="#333" stroke-width="0.9"/>
<rect x="662.50" y="189.8" width="1.6" height="6.3" fill="#8a4545" stroke="#1a1a1a" stroke-width="0.45"/>
<line x1="666.0" y1="190.6" x2="666.0" y2="200.8" stroke="#333" stroke-width="0.9"/>
<rect x="665.20" y="192.9" width="1.6" height="4.6" fill="#8a4545" stroke="#1a1a1a" stroke-width="0.45"/>
<line x1="668.7" y1="193.2" x2="668.7" y2="205.0" stroke="#333" stroke-width="0.9"/>
<rect x="667.90" y="194.6" width="1.6" height="9.1" fill="#8a4545" stroke="#1a1a1a" stroke-width="0.45"/>
<line x1="671.4" y1="185.0" x2="671.4" y2="212.4" stroke="#333" stroke-width="0.9"/>
<rect x="670.60" y="185.4" width="1.6" height="24.7" fill="#3a7a3a" stroke="#1a1a1a" stroke-width="0.45"/>
<line x1="674.1" y1="166.6" x2="674.1" y2="193.6" stroke="#333" stroke-width="0.9"/>
<rect x="673.30" y="172.5" width="1.6" height="20.8" fill="#3a7a3a" stroke="#1a1a1a" stroke-width="0.45"/>
<line x1="676.8" y1="164.7" x2="676.8" y2="179.2" stroke="#333" stroke-width="0.9"/>
<rect x="676.00" y="165.8" width="1.6" height="12.3" fill="#3a7a3a" stroke="#1a1a1a" stroke-width="0.45"/>
<line x1="679.5" y1="161.7" x2="679.5" y2="169.0" stroke="#333" stroke-width="0.9"/>
<rect x="678.70" y="163.0" width="1.6" height="5.1" fill="#3a7a3a" stroke="#1a1a1a" stroke-width="0.45"/>
<line x1="682.2" y1="161.5" x2="682.2" y2="169.4" stroke="#333" stroke-width="0.9"/>
<rect x="681.40" y="162.4" width="1.6" height="4.6" fill="#3a7a3a" stroke="#1a1a1a" stroke-width="0.45"/>
<line x1="684.9" y1="158.4" x2="684.9" y2="166.2" stroke="#333" stroke-width="0.9"/>
<rect x="684.10" y="163.0" width="1.6" height="2.3" fill="#8a4545" stroke="#1a1a1a" stroke-width="0.45"/>
<line x1="687.6" y1="146.5" x2="687.6" y2="170.4" stroke="#333" stroke-width="0.9"/>
<rect x="686.80" y="146.9" width="1.6" height="22.2" fill="#3a7a3a" stroke="#1a1a1a" stroke-width="0.45"/>
<line x1="690.3" y1="146.5" x2="690.3" y2="153.9" stroke="#333" stroke-width="0.9"/>
<rect x="689.50" y="146.5" width="1.6" height="6.8" fill="#3a7a3a" stroke="#1a1a1a" stroke-width="0.45"/>
<line x1="693.0" y1="144.1" x2="693.0" y2="149.7" stroke="#333" stroke-width="0.9"/>
<rect x="692.20" y="144.4" width="1.6" height="4.8" fill="#3a7a3a" stroke="#1a1a1a" stroke-width="0.45"/>
<line x1="695.7" y1="133.7" x2="695.7" y2="149.8" stroke="#333" stroke-width="0.9"/>
<rect x="694.90" y="133.9" width="1.6" height="15.2" fill="#3a7a3a" stroke="#1a1a1a" stroke-width="0.45"/>
<line x1="698.4" y1="132.1" x2="698.4" y2="138.3" stroke="#333" stroke-width="0.9"/>
<rect x="697.60" y="134.7" width="1.6" height="2.7" fill="#3a7a3a" stroke="#1a1a1a" stroke-width="0.45"/>
<line x1="701.1" y1="132.9" x2="701.1" y2="139.4" stroke="#333" stroke-width="0.9"/>
<rect x="700.30" y="133.2" width="1.6" height="3.5" fill="#8a4545" stroke="#1a1a1a" stroke-width="0.45"/>
<line x1="703.8" y1="128.3" x2="703.8" y2="137.2" stroke="#333" stroke-width="0.9"/>
<rect x="703.00" y="130.0" width="1.6" height="6.8" fill="#3a7a3a" stroke="#1a1a1a" stroke-width="0.45"/>
<line x1="706.5" y1="121.0" x2="706.5" y2="134.0" stroke="#333" stroke-width="0.9"/>
<rect x="705.70" y="122.0" width="1.6" height="10.0" fill="#3a7a3a" stroke="#1a1a1a" stroke-width="0.45"/>
<line x1="709.2" y1="117.0" x2="709.2" y2="133.0" stroke="#333" stroke-width="0.9"/>
<rect x="708.40" y="118.0" width="1.6" height="12.0" fill="#3a7a3a" stroke="#1a1a1a" stroke-width="0.45"/>
<line x1="711.9" y1="104.0" x2="711.9" y2="125.0" stroke="#333" stroke-width="0.9"/>
<rect x="711.10" y="105.0" width="1.6" height="19.0" fill="#3a7a3a" stroke="#1a1a1a" stroke-width="0.45"/>
<line x1="714.6" y1="101.0" x2="714.6" y2="110.4" stroke="#333" stroke-width="0.9"/>
<rect x="713.80" y="102.7" width="1.6" height="3.3" fill="#3a7a3a" stroke="#1a1a1a" stroke-width="0.45"/>
<line x1="717.3" y1="98.5" x2="717.3" y2="107.6" stroke="#333" stroke-width="0.9"/>
<rect x="716.50" y="99.5" width="1.6" height="3.2" fill="#8a4545" stroke="#1a1a1a" stroke-width="0.45"/>
<line x1="720.0" y1="88.0" x2="720.0" y2="105.5" stroke="#333" stroke-width="0.9"/>
<rect x="719.20" y="89.0" width="1.6" height="12.7" fill="#3a7a3a" stroke="#1a1a1a" stroke-width="0.45"/>
<line x1="722.7" y1="81.5" x2="722.7" y2="97.3" stroke="#333" stroke-width="0.9"/>
<rect x="721.90" y="82.5" width="1.6" height="9.3" fill="#3a7a3a" stroke="#1a1a1a" stroke-width="0.45"/>
<line x1="725.4" y1="77.6" x2="725.4" y2="85.8" stroke="#333" stroke-width="0.9"/>
<rect x="724.60" y="79.3" width="1.6" height="4.3" fill="#3a7a3a" stroke="#1a1a1a" stroke-width="0.45"/>
<line x1="728.1" y1="72.7" x2="728.1" y2="82.6" stroke="#333" stroke-width="0.9"/>
<rect x="727.30" y="76.5" width="1.6" height="5.5" fill="#3a7a3a" stroke="#1a1a1a" stroke-width="0.45"/>
<line x1="730.8" y1="73.5" x2="730.8" y2="88.0" stroke="#333" stroke-width="0.9"/>
<rect x="730.00" y="74.4" width="1.6" height="12.0" fill="#8a4545" stroke="#1a1a1a" stroke-width="0.45"/>
<line x1="733.5" y1="79.3" x2="733.5" y2="90.0" stroke="#333" stroke-width="0.9"/>
<rect x="732.70" y="80.4" width="1.6" height="6.0" fill="#8a4545" stroke="#1a1a1a" stroke-width="0.45"/>
<line x1="736.2" y1="85.0" x2="736.2" y2="97.3" stroke="#333" stroke-width="0.9"/>
<rect x="735.40" y="86.4" width="1.6" height="2.2" fill="#8a4545" stroke="#1a1a1a" stroke-width="0.45"/>
<line x1="738.9" y1="107.0" x2="738.9" y2="121.9" stroke="#333" stroke-width="0.9"/>
<rect x="738.10" y="108.8" width="1.6" height="9.8" fill="#3a7a3a" stroke="#1a1a1a" stroke-width="0.45"/>
<line x1="741.6" y1="102.2" x2="741.6" y2="113.7" stroke="#333" stroke-width="0.9"/>
<rect x="740.80" y="103.3" width="1.6" height="9.3" fill="#3a7a3a" stroke="#1a1a1a" stroke-width="0.45"/>
<line x1="744.3" y1="99.0" x2="744.3" y2="113.0" stroke="#333" stroke-width="0.9"/>
<rect x="743.50" y="100.0" width="1.6" height="8.2" fill="#3a7a3a" stroke="#1a1a1a" stroke-width="0.45"/>
<line x1="747.0" y1="96.2" x2="747.0" y2="103.8" stroke="#333" stroke-width="0.9"/>
<rect x="746.20" y="99.0" width="1.6" height="2.0" fill="#8a4545" stroke="#1a1a1a" stroke-width="0.45"/>
<line x1="749.7" y1="95.0" x2="749.7" y2="107.5" stroke="#333" stroke-width="0.9"/>
<rect x="748.90" y="96.0" width="1.6" height="10.0" fill="#8a4545" stroke="#1a1a1a" stroke-width="0.45"/>
<line x1="752.4" y1="102.0" x2="752.4" y2="111.0" stroke="#333" stroke-width="0.9"/>
<rect x="751.60" y="102.7" width="1.6" height="5.0" fill="#3a7a3a" stroke="#1a1a1a" stroke-width="0.45"/>
<line x1="755.1" y1="95.5" x2="755.1" y2="109.8" stroke="#333" stroke-width="0.9"/>
<rect x="754.30" y="96.2" width="1.6" height="9.3" fill="#3a7a3a" stroke="#1a1a1a" stroke-width="0.45"/>
<line x1="757.8" y1="87.5" x2="757.8" y2="98.4" stroke="#333" stroke-width="0.9"/>
<rect x="757.00" y="91.3" width="1.6" height="5.4" fill="#3a7a3a" stroke="#1a1a1a" stroke-width="0.45"/>
<line x1="760.5" y1="119.8" x2="760.5" y2="150.4" stroke="#333" stroke-width="0.9"/>
<rect x="759.70" y="124.2" width="1.6" height="20.8" fill="#8a4545" stroke="#1a1a1a" stroke-width="0.45"/>
<line x1="763.2" y1="161.3" x2="763.2" y2="177.0" stroke="#333" stroke-width="0.9"/>
<rect x="762.40" y="166.4" width="1.6" height="9.1" fill="#8a4545" stroke="#1a1a1a" stroke-width="0.45"/>
<line x1="765.9" y1="171.0" x2="765.9" y2="194.0" stroke="#333" stroke-width="0.9"/>
<rect x="765.10" y="172.3" width="1.6" height="13.1" fill="#3a7a3a" stroke="#1a1a1a" stroke-width="0.45"/>
<line x1="768.6" y1="192.0" x2="768.6" y2="214.8" stroke="#333" stroke-width="0.9"/>
<rect x="767.80" y="207.0" width="1.6" height="3.0" fill="#8a4545" stroke="#1a1a1a" stroke-width="0.45"/>
<line x1="771.3" y1="197.0" x2="771.3" y2="223.6" stroke="#333" stroke-width="0.9"/>
<rect x="770.50" y="198.5" width="1.6" height="22.9" fill="#3a7a3a" stroke="#1a1a1a" stroke-width="0.45"/>
<line x1="774.0" y1="187.0" x2="774.0" y2="207.0" stroke="#333" stroke-width="0.9"/>
<rect x="773.20" y="197.4" width="1.6" height="2.2" fill="#8a4545" stroke="#1a1a1a" stroke-width="0.45"/>
<line x1="776.7" y1="196.0" x2="776.7" y2="209.0" stroke="#333" stroke-width="0.9"/>
<rect x="775.90" y="197.4" width="1.6" height="2.6" fill="#8a4545" stroke="#1a1a1a" stroke-width="0.45"/>
<line x1="779.4" y1="194.0" x2="779.4" y2="199.6" stroke="#333" stroke-width="0.9"/>
<rect x="778.60" y="195.6" width="1.6" height="2.9" fill="#3a7a3a" stroke="#1a1a1a" stroke-width="0.45"/>
<line x1="782.1" y1="197.5" x2="782.1" y2="207.0" stroke="#333" stroke-width="0.9"/>
<rect x="781.30" y="198.5" width="1.6" height="7.5" fill="#8a4545" stroke="#1a1a1a" stroke-width="0.45"/>
<line x1="784.8" y1="206.0" x2="784.8" y2="217.0" stroke="#333" stroke-width="0.9"/>
<rect x="784.00" y="208.0" width="1.6" height="3.6" fill="#3a7a3a" stroke="#1a1a1a" stroke-width="0.45"/>
<line x1="787.5" y1="205.0" x2="787.5" y2="216.0" stroke="#333" stroke-width="0.9"/>
<rect x="786.70" y="206.0" width="1.6" height="5.6" fill="#3a7a3a" stroke="#1a1a1a" stroke-width="0.45"/>
<line x1="790.2" y1="204.0" x2="790.2" y2="217.0" stroke="#333" stroke-width="0.9"/>
<rect x="789.40" y="206.0" width="1.6" height="5.6" fill="#8a4545" stroke="#1a1a1a" stroke-width="0.45"/>
<line x1="792.9" y1="205.0" x2="792.9" y2="212.6" stroke="#333" stroke-width="0.9"/>
<rect x="792.10" y="206.0" width="1.6" height="3.4" fill="#3a7a3a" stroke="#1a1a1a" stroke-width="0.45"/>
<line x1="795.6" y1="203.0" x2="795.6" y2="217.0" stroke="#333" stroke-width="0.9"/>
<rect x="794.80" y="204.0" width="1.6" height="5.4" fill="#8a4545" stroke="#1a1a1a" stroke-width="0.45"/>
<line x1="798.3" y1="202.0" x2="798.3" y2="209.5" stroke="#333" stroke-width="0.9"/>
<rect x="797.50" y="202.8" width="1.6" height="5.5" fill="#3a7a3a" stroke="#1a1a1a" stroke-width="0.45"/>
<line x1="801.0" y1="198.5" x2="801.0" y2="205.0" stroke="#333" stroke-width="0.9"/>
<rect x="800.20" y="199.6" width="1.6" height="4.4" fill="#3a7a3a" stroke="#1a1a1a" stroke-width="0.45"/>
<line x1="803.7" y1="195.3" x2="803.7" y2="200.8" stroke="#333" stroke-width="0.9"/>
<rect x="802.90" y="196.3" width="1.6" height="3.3" fill="#3a7a3a" stroke="#1a1a1a" stroke-width="0.45"/>
<line x1="806.4" y1="193.0" x2="806.4" y2="201.7" stroke="#333" stroke-width="0.9"/>
<rect x="805.60" y="194.0" width="1.6" height="4.5" fill="#3a7a3a" stroke="#1a1a1a" stroke-width="0.45"/>
<line x1="809.1" y1="187.5" x2="809.1" y2="198.5" stroke="#333" stroke-width="0.9"/>
<rect x="808.30" y="188.6" width="1.6" height="7.7" fill="#3a7a3a" stroke="#1a1a1a" stroke-width="0.45"/>
<line x1="811.8" y1="183.0" x2="811.8" y2="195.0" stroke="#333" stroke-width="0.9"/>
<rect x="811.00" y="186.5" width="1.6" height="7.5" fill="#8a4545" stroke="#1a1a1a" stroke-width="0.45"/>
<line x1="814.5" y1="188.6" x2="814.5" y2="199.6" stroke="#333" stroke-width="0.9"/>
<rect x="813.70" y="189.7" width="1.6" height="6.6" fill="#8a4545" stroke="#1a1a1a" stroke-width="0.45"/>
<line x1="817.2" y1="189.7" x2="817.2" y2="196.3" stroke="#333" stroke-width="0.9"/>
<rect x="816.40" y="191.0" width="1.6" height="2.0" fill="#8a4545" stroke="#1a1a1a" stroke-width="0.45"/>
<line x1="819.9" y1="190.8" x2="819.9" y2="201.7" stroke="#333" stroke-width="0.9"/>
<rect x="819.10" y="192.0" width="1.6" height="5.4" fill="#3a7a3a" stroke="#1a1a1a" stroke-width="0.45"/>
<line x1="822.6" y1="192.0" x2="822.6" y2="200.6" stroke="#333" stroke-width="0.9"/>
<rect x="821.80" y="194.0" width="1.6" height="3.4" fill="#8a4545" stroke="#1a1a1a" stroke-width="0.45"/>
<line x1="825.3" y1="196.3" x2="825.3" y2="208.3" stroke="#333" stroke-width="0.9"/>
<rect x="824.50" y="197.4" width="1.6" height="9.8" fill="#8a4545" stroke="#1a1a1a" stroke-width="0.45"/>
<line x1="828.0" y1="210.5" x2="828.0" y2="222.5" stroke="#333" stroke-width="0.9"/>
<rect x="827.20" y="211.6" width="1.6" height="9.8" fill="#8a4545" stroke="#1a1a1a" stroke-width="0.45"/>
<!-- red pattern lines -->
<polyline points="466,247.4 552.8,183 590,239 728.4,72.4 770.5,223.6 812,181.7 828.6,222" fill="none" stroke="#f01414" stroke-width="1.4" stroke-linejoin="round"/>
<line x1="814.5" y1="223" x2="814.5" y2="369" stroke="#e02020" stroke-width="0.9"/>
<path d="M811.6,367.5 L817.4,367.5 L814.5,373.5 Z" fill="#e02020"/>
<text x="807" y="366" font-size="6.4" font-weight="bold" fill="#e03030" transform="rotate(25 809.7 364)">%</text>
<!-- RSI -->
<polyline points="19.6,452.7 26.2,455.2 31.9,447.0 39.0,450.6 43.6,458.0 48.4,456.6 53.0,459.8 58.0,463.0 62.7,458.0 67.5,461.0 72.0,474.0 75.5,474.7 77.7,463.0 83.4,463.0 86.6,459.8 89.8,453.4 94.5,451.8 99.0,454.0 104.0,451.8 109.0,450.0 113.6,453.4 118.4,451.8 123.0,456.6 128.0,459.8 132.7,459.8 137.5,458.0 142.0,459.8 147.0,463.0 150.0,459.8 155.0,463.0 159.8,463.0 164.5,459.8 169.0,459.8 172.5,456.6 177.0,450.0 182.0,451.8 185.0,455.0 187.8,451.8 190.6,458.0 194.8,453.4 199.5,450.0 206.0,450.0 210.7,455.0 215.4,458.0 220.0,456.6 225.0,451.8 229.8,450.0 234.5,450.0 239.0,450.0 242.5,453.4 245.7,451.8 250.4,455.0 255.0,453.4 258.4,451.8 261.6,453.4 264.8,451.8 268.0,447.0 272.7,443.9 277.5,440.7 280.7,441.6 284.8,447.0 289.5,448.0 296.0,451.0 300.7,443.9 305.5,447.0 310.0,445.5 315.0,448.0 319.8,445.5 324.5,447.0 331.0,447.0 335.7,445.5 340.5,443.9 345.0,446.0 350.0,441.6 353.0,445.5 356.4,454.4 359.5,451.8 361.0,454.0 366.0,448.6 370.7,446.0 375.5,443.9 381.8,442.3 388.0,441.6 394.5,440.0 401.0,439.7 405.7,440.7 409.5,443.9 413.6,441.6 418.4,439.7 426.0,439.7 432.7,438.5 439.0,440.0 445.5,439.0 453.4,439.7 459.8,438.5 464.5,441.6 471.0,439.7 477.0,439.0 483.6,440.0 488.4,441.0 494.8,439.0 499.5,437.8 504.0,439.7 507.5,438.5 512.0,437.8 520.0,436.0 525.0,441.0 528.0,439.7 531.0,441.6 537.7,440.7 542.5,442.3 547.0,445.5 552.0,440.7 554.5,446.0 559.4,444.4 566.9,445.5 574.4,448.0 580.0,450.0 585.6,454.5 590.5,452.6 595.0,454.5 600.6,448.0 606.0,442.5 610.0,441.7 613.7,443.0 617.5,441.7 621.0,444.4 625.0,443.0 630.6,447.0 634.4,452.6 640.0,450.7 645.6,451.9 651.0,446.0 656.9,444.4 660.6,445.5 664.0,444.4 669.0,448.0 673.7,443.0 679.4,438.7 686.9,438.0 694.0,436.5 700.0,438.7 707.5,436.9 715.0,435.0 722.5,434.0 730.0,434.0 735.6,436.9 739.4,442.5 745.0,440.6 748.7,443.0 754.0,440.6 757.0,442.5 760.0,455.6 763.0,463.0 765.6,457.5 768.0,465.0 771.0,458.0 778.7,457.5 785.5,460.5 790.0,458.0 795.6,457.5 801.0,454.9 806.9,453.0 810.6,450.0 814.0,450.7 818.0,451.9 821.9,453.0 825.6,455.6 828.0,458.6" fill="none" stroke="#222" stroke-width="0.9" stroke-linejoin="round"/>
<!-- volume -->
<line x1="19" y1="495.6" x2="866" y2="495.6" stroke="#d0d6e6" stroke-width="0.8"/>
<rect x="19.85" y="493.8" width="1.7" height="1.8" fill="#e0494f"/>
<rect x="22.55" y="493.4" width="1.7" height="2.2" fill="#e0494f"/>
<rect x="25.25" y="492.8" width="1.7" height="2.8" fill="#33c433"/>
<rect x="27.95" y="494.4" width="1.7" height="1.2" fill="#33c433"/>
<rect x="30.65" y="493.7" width="1.7" height="1.9" fill="#e0494f"/>
<rect x="33.35" y="491.8" width="1.7" height="3.8" fill="#e0494f"/>
<rect x="36.05" y="492.2" width="1.7" height="3.4" fill="#33c433"/>
<rect x="38.75" y="492.7" width="1.7" height="2.9" fill="#33c433"/>
<rect x="41.45" y="492.7" width="1.7" height="2.9" fill="#e0494f"/>
<rect x="44.15" y="493.0" width="1.7" height="2.6" fill="#e0494f"/>
<rect x="46.85" y="492.7" width="1.7" height="2.9" fill="#e0494f"/>
<rect x="49.55" y="492.4" width="1.7" height="3.2" fill="#33c433"/>
<rect x="52.25" y="493.6" width="1.7" height="2.0" fill="#e0494f"/>
<rect x="54.95" y="492.1" width="1.7" height="3.5" fill="#e0494f"/>
<rect x="57.65" y="492.5" width="1.7" height="3.1" fill="#e0494f"/>
<rect x="60.35" y="492.5" width="1.7" height="3.1" fill="#33c433"/>
<rect x="63.05" y="493.4" width="1.7" height="2.2" fill="#33c433"/>
<rect x="65.75" y="493.2" width="1.7" height="2.4" fill="#33c433"/>
<rect x="68.45" y="492.1" width="1.7" height="3.5" fill="#33c433"/>
<rect x="71.15" y="494.0" width="1.7" height="1.6" fill="#33c433"/>
<rect x="73.85" y="491.9" width="1.7" height="3.7" fill="#e0494f"/>
<rect x="76.55" y="492.8" width="1.7" height="2.8" fill="#e0494f"/>
<rect x="79.25" y="493.1" width="1.7" height="2.5" fill="#e0494f"/>
<rect x="81.95" y="493.5" width="1.7" height="2.1" fill="#e0494f"/>
<rect x="84.65" y="491.6" width="1.7" height="4.0" fill="#e0494f"/>
<rect x="87.35" y="491.1" width="1.7" height="4.5" fill="#33c433"/>
<rect x="90.05" y="492.2" width="1.7" height="3.4" fill="#33c433"/>
<rect x="92.75" y="492.7" width="1.7" height="2.9" fill="#e0494f"/>
<rect x="95.45" y="492.2" width="1.7" height="3.4" fill="#e0494f"/>
<rect x="98.15" y="492.0" width="1.7" height="3.6" fill="#e0494f"/>
<rect x="100.85" y="492.5" width="1.7" height="3.1" fill="#e0494f"/>
<rect x="103.55" y="492.2" width="1.7" height="3.4" fill="#33c433"/>
<rect x="106.25" y="483.6" width="1.7" height="12.0" fill="#33c433"/>
<rect x="108.95" y="492.2" width="1.7" height="3.4" fill="#e0494f"/>
<rect x="111.65" y="494.2" width="1.7" height="1.4" fill="#e0494f"/>
<rect x="114.35" y="493.3" width="1.7" height="2.3" fill="#33c433"/>
<rect x="117.05" y="493.6" width="1.7" height="2.0" fill="#e0494f"/>
<rect x="119.75" y="492.1" width="1.7" height="3.5" fill="#33c433"/>
<rect x="122.45" y="492.8" width="1.7" height="2.8" fill="#33c433"/>
<rect x="125.15" y="492.5" width="1.7" height="3.1" fill="#e0494f"/>
<rect x="127.85" y="492.1" width="1.7" height="3.5" fill="#e0494f"/>
<rect x="130.55" y="493.1" width="1.7" height="2.5" fill="#e0494f"/>
<rect x="133.25" y="493.6" width="1.7" height="2.0" fill="#33c433"/>
<rect x="135.95" y="492.8" width="1.7" height="2.8" fill="#33c433"/>
<rect x="138.65" y="493.9" width="1.7" height="1.7" fill="#e0494f"/>
<rect x="141.35" y="492.8" width="1.7" height="2.8" fill="#33c433"/>
<rect x="144.05" y="494.3" width="1.7" height="1.3" fill="#33c433"/>
<rect x="146.75" y="493.6" width="1.7" height="2.0" fill="#e0494f"/>
<rect x="149.45" y="492.1" width="1.7" height="3.5" fill="#33c433"/>
<rect x="152.15" y="493.2" width="1.7" height="2.4" fill="#e0494f"/>
<rect x="154.85" y="492.7" width="1.7" height="2.9" fill="#e0494f"/>
<rect x="157.55" y="492.9" width="1.7" height="2.7" fill="#e0494f"/>
<rect x="160.25" y="492.0" width="1.7" height="3.6" fill="#e0494f"/>
<rect x="162.95" y="493.3" width="1.7" height="2.3" fill="#e0494f"/>
<rect x="165.65" y="493.8" width="1.7" height="1.8" fill="#33c433"/>
<rect x="168.35" y="491.9" width="1.7" height="3.7" fill="#33c433"/>
<rect x="171.05" y="493.0" width="1.7" height="2.6" fill="#e0494f"/>
<rect x="173.75" y="493.3" width="1.7" height="2.3" fill="#33c433"/>
<rect x="176.45" y="494.3" width="1.7" height="1.3" fill="#33c433"/>
<rect x="179.15" y="492.8" width="1.7" height="2.8" fill="#33c433"/>
<rect x="181.85" y="492.8" width="1.7" height="2.8" fill="#e0494f"/>
<rect x="184.55" y="492.6" width="1.7" height="3.0" fill="#e0494f"/>
<rect x="187.25" y="492.6" width="1.7" height="3.0" fill="#e0494f"/>
<rect x="189.95" y="494.3" width="1.7" height="1.3" fill="#33c433"/>
<rect x="192.65" y="492.6" width="1.7" height="3.0" fill="#e0494f"/>
<rect x="195.35" y="493.7" width="1.7" height="1.9" fill="#33c433"/>
<rect x="198.05" y="492.9" width="1.7" height="2.7" fill="#33c433"/>
<rect x="200.75" y="493.5" width="1.7" height="2.1" fill="#33c433"/>
<rect x="203.45" y="493.4" width="1.7" height="2.2" fill="#e0494f"/>
<rect x="206.15" y="493.6" width="1.7" height="2.0" fill="#e0494f"/>
<rect x="208.85" y="492.4" width="1.7" height="3.2" fill="#33c433"/>
<rect x="211.55" y="492.9" width="1.7" height="2.7" fill="#e0494f"/>
<rect x="214.25" y="493.6" width="1.7" height="2.0" fill="#33c433"/>
<rect x="216.95" y="492.3" width="1.7" height="3.3" fill="#33c433"/>
<rect x="219.65" y="493.9" width="1.7" height="1.7" fill="#33c433"/>
<rect x="222.35" y="492.6" width="1.7" height="3.0" fill="#e0494f"/>
<rect x="225.05" y="493.6" width="1.7" height="2.0" fill="#e0494f"/>
<rect x="227.75" y="492.2" width="1.7" height="3.4" fill="#33c433"/>
<rect x="230.45" y="492.2" width="1.7" height="3.4" fill="#e0494f"/>
<rect x="233.15" y="493.5" width="1.7" height="2.1" fill="#e0494f"/>
<rect x="235.85" y="492.1" width="1.7" height="3.5" fill="#33c433"/>
<rect x="238.55" y="493.8" width="1.7" height="1.8" fill="#33c433"/>
<rect x="241.25" y="493.0" width="1.7" height="2.6" fill="#33c433"/>
<rect x="243.95" y="492.3" width="1.7" height="3.3" fill="#e0494f"/>
<rect x="246.65" y="493.9" width="1.7" height="1.7" fill="#33c433"/>
<rect x="249.35" y="492.3" width="1.7" height="3.3" fill="#e0494f"/>
<rect x="252.05" y="492.3" width="1.7" height="3.3" fill="#e0494f"/>
<rect x="254.75" y="494.1" width="1.7" height="1.5" fill="#33c433"/>
<rect x="257.45" y="492.3" width="1.7" height="3.3" fill="#e0494f"/>
<rect x="260.15" y="493.5" width="1.7" height="2.1" fill="#e0494f"/>
<rect x="262.85" y="493.3" width="1.7" height="2.3" fill="#33c433"/>
<rect x="265.55" y="492.0" width="1.7" height="3.6" fill="#e0494f"/>
<rect x="268.25" y="494.4" width="1.7" height="1.2" fill="#33c433"/>
<rect x="270.95" y="492.1" width="1.7" height="3.5" fill="#33c433"/>
<rect x="273.65" y="493.3" width="1.7" height="2.3" fill="#33c433"/>
<rect x="276.35" y="492.0" width="1.7" height="3.6" fill="#e0494f"/>
<rect x="279.05" y="492.5" width="1.7" height="3.1" fill="#e0494f"/>
<rect x="281.75" y="492.5" width="1.7" height="3.1" fill="#e0494f"/>
<rect x="284.45" y="490.6" width="1.7" height="5.0" fill="#33c433"/>
<rect x="287.15" y="489.6" width="1.7" height="6.0" fill="#e0494f"/>
<rect x="289.85" y="491.3" width="1.7" height="4.3" fill="#e0494f"/>
<rect x="292.55" y="491.3" width="1.7" height="4.3" fill="#e0494f"/>
<rect x="295.25" y="494.1" width="1.7" height="1.5" fill="#33c433"/>
<rect x="297.95" y="493.2" width="1.7" height="2.4" fill="#33c433"/>
<rect x="300.65" y="492.8" width="1.7" height="2.8" fill="#33c433"/>
<rect x="303.35" y="493.0" width="1.7" height="2.6" fill="#33c433"/>
<rect x="306.05" y="492.6" width="1.7" height="3.0" fill="#e0494f"/>
<rect x="308.75" y="493.5" width="1.7" height="2.1" fill="#e0494f"/>
<rect x="311.45" y="493.6" width="1.7" height="2.0" fill="#e0494f"/>
<rect x="314.15" y="491.6" width="1.7" height="4.0" fill="#e0494f"/>
<rect x="316.85" y="492.2" width="1.7" height="3.4" fill="#33c433"/>
<rect x="319.55" y="493.3" width="1.7" height="2.3" fill="#33c433"/>
<rect x="322.25" y="492.8" width="1.7" height="2.8" fill="#e0494f"/>
<rect x="324.95" y="478.1" width="1.7" height="17.5" fill="#e0494f"/>
<rect x="327.65" y="493.7" width="1.7" height="1.9" fill="#33c433"/>
<rect x="330.35" y="491.5" width="1.7" height="4.1" fill="#33c433"/>
<rect x="333.05" y="493.1" width="1.7" height="2.5" fill="#33c433"/>
<rect x="335.75" y="492.1" width="1.7" height="3.5" fill="#33c433"/>
<rect x="338.45" y="493.5" width="1.7" height="2.1" fill="#33c433"/>
<rect x="341.15" y="492.4" width="1.7" height="3.2" fill="#e0494f"/>
<rect x="343.85" y="493.9" width="1.7" height="1.7" fill="#33c433"/>
<rect x="346.55" y="492.2" width="1.7" height="3.4" fill="#33c433"/>
<rect x="349.25" y="490.1" width="1.7" height="5.5" fill="#33c433"/>
<rect x="351.95" y="492.9" width="1.7" height="2.7" fill="#e0494f"/>
<rect x="354.65" y="489.6" width="1.7" height="6.0" fill="#e0494f"/>
<rect x="357.35" y="493.3" width="1.7" height="2.3" fill="#e0494f"/>
<rect x="360.05" y="491.1" width="1.7" height="4.5" fill="#33c433"/>
<rect x="362.75" y="491.4" width="1.7" height="4.2" fill="#33c433"/>
<rect x="365.45" y="491.3" width="1.7" height="4.3" fill="#33c433"/>
<rect x="368.15" y="492.7" width="1.7" height="2.9" fill="#e0494f"/>
<rect x="370.85" y="492.0" width="1.7" height="3.6" fill="#33c433"/>
<rect x="373.55" y="492.0" width="1.7" height="3.6" fill="#33c433"/>
<rect x="376.25" y="493.8" width="1.7" height="1.8" fill="#33c433"/>
<rect x="378.95" y="493.7" width="1.7" height="1.9" fill="#33c433"/>
<rect x="381.65" y="493.8" width="1.7" height="1.8" fill="#e0494f"/>
<rect x="384.35" y="493.5" width="1.7" height="2.1" fill="#e0494f"/>
<rect x="387.05" y="493.7" width="1.7" height="1.9" fill="#33c433"/>
<rect x="389.75" y="490.1" width="1.7" height="5.5" fill="#33c433"/>
<rect x="392.45" y="491.6" width="1.7" height="4.0" fill="#e0494f"/>
<rect x="395.15" y="489.6" width="1.7" height="6.0" fill="#33c433"/>
<rect x="397.85" y="491.8" width="1.7" height="3.8" fill="#33c433"/>
<rect x="400.55" y="493.1" width="1.7" height="2.5" fill="#e0494f"/>
<rect x="403.25" y="493.3" width="1.7" height="2.3" fill="#e0494f"/>
<rect x="405.95" y="492.2" width="1.7" height="3.4" fill="#33c433"/>
<rect x="408.65" y="490.6" width="1.7" height="5.0" fill="#e0494f"/>
<rect x="411.35" y="492.8" width="1.7" height="2.8" fill="#e0494f"/>
<rect x="414.05" y="491.1" width="1.7" height="4.5" fill="#33c433"/>
<rect x="416.75" y="490.1" width="1.7" height="5.5" fill="#33c433"/>
<rect x="419.45" y="491.1" width="1.7" height="4.5" fill="#e0494f"/>
<rect x="422.15" y="492.1" width="1.7" height="3.5" fill="#33c433"/>
<rect x="424.85" y="493.8" width="1.7" height="1.8" fill="#e0494f"/>
<rect x="427.55" y="492.5" width="1.7" height="3.1" fill="#33c433"/>
<rect x="430.25" y="493.5" width="1.7" height="2.1" fill="#33c433"/>
<rect x="432.95" y="492.3" width="1.7" height="3.3" fill="#e0494f"/>
<rect x="435.65" y="492.0" width="1.7" height="3.6" fill="#e0494f"/>
<rect x="438.35" y="491.9" width="1.7" height="3.7" fill="#33c433"/>
<rect x="441.05" y="493.2" width="1.7" height="2.4" fill="#33c433"/>
<rect x="443.75" y="494.5" width="1.7" height="1.1" fill="#e0494f"/>
<rect x="446.45" y="494.2" width="1.7" height="1.4" fill="#e0494f"/>
<rect x="449.15" y="492.7" width="1.7" height="2.9" fill="#33c433"/>
<rect x="451.85" y="493.4" width="1.7" height="2.2" fill="#33c433"/>
<rect x="454.55" y="489.6" width="1.7" height="6.0" fill="#e0494f"/>
<rect x="457.25" y="493.4" width="1.7" height="2.2" fill="#e0494f"/>
<rect x="459.95" y="493.6" width="1.7" height="2.0" fill="#e0494f"/>
<rect x="462.65" y="493.5" width="1.7" height="2.1" fill="#33c433"/>
<rect x="465.35" y="492.9" width="1.7" height="2.7" fill="#33c433"/>
<rect x="468.05" y="492.6" width="1.7" height="3.0" fill="#e0494f"/>
<rect x="470.75" y="494.0" width="1.7" height="1.6" fill="#e0494f"/>
<rect x="473.45" y="492.5" width="1.7" height="3.1" fill="#33c433"/>
<rect x="476.15" y="492.5" width="1.7" height="3.1" fill="#33c433"/>
<rect x="478.85" y="492.9" width="1.7" height="2.7" fill="#33c433"/>
<rect x="481.55" y="492.6" width="1.7" height="3.0" fill="#33c433"/>
<rect x="484.25" y="493.2" width="1.7" height="2.4" fill="#33c433"/>
<rect x="486.95" y="493.8" width="1.7" height="1.8" fill="#33c433"/>
<rect x="489.65" y="494.1" width="1.7" height="1.5" fill="#33c433"/>
<rect x="492.35" y="493.7" width="1.7" height="1.9" fill="#33c433"/>
<rect x="495.05" y="493.9" width="1.7" height="1.7" fill="#e0494f"/>
<rect x="497.75" y="492.5" width="1.7" height="3.1" fill="#33c433"/>
<rect x="500.45" y="492.3" width="1.7" height="3.3" fill="#e0494f"/>
<rect x="503.15" y="492.8" width="1.7" height="2.8" fill="#33c433"/>
<rect x="505.85" y="493.0" width="1.7" height="2.6" fill="#33c433"/>
<rect x="508.55" y="492.8" width="1.7" height="2.8" fill="#33c433"/>
<rect x="511.25" y="493.3" width="1.7" height="2.3" fill="#e0494f"/>
<rect x="513.95" y="493.8" width="1.7" height="1.8" fill="#33c433"/>
<rect x="516.65" y="493.2" width="1.7" height="2.4" fill="#33c433"/>
<rect x="519.35" y="493.1" width="1.7" height="2.5" fill="#e0494f"/>
<rect x="522.05" y="493.0" width="1.7" height="2.6" fill="#33c433"/>
<rect x="524.75" y="494.3" width="1.7" height="1.3" fill="#e0494f"/>
<rect x="527.45" y="493.2" width="1.7" height="2.4" fill="#33c433"/>
<rect x="530.15" y="493.5" width="1.7" height="2.1" fill="#33c433"/>
<rect x="532.85" y="494.4" width="1.7" height="1.2" fill="#e0494f"/>
<rect x="535.55" y="493.3" width="1.7" height="2.3" fill="#33c433"/>
<rect x="538.25" y="494.0" width="1.7" height="1.6" fill="#33c433"/>
<rect x="540.95" y="494.5" width="1.7" height="1.1" fill="#e0494f"/>
<rect x="543.65" y="492.8" width="1.7" height="2.8" fill="#e0494f"/>
<rect x="546.35" y="493.6" width="1.7" height="2.0" fill="#e0494f"/>
<rect x="549.05" y="493.8" width="1.7" height="1.8" fill="#33c433"/>
<rect x="551.75" y="494.0" width="1.7" height="1.6" fill="#33c433"/>
<rect x="554.45" y="492.7" width="1.7" height="2.9" fill="#e0494f"/>
<rect x="557.15" y="494.1" width="1.7" height="1.5" fill="#e0494f"/>
<rect x="559.85" y="492.6" width="1.7" height="3.0" fill="#33c433"/>
<rect x="562.55" y="494.2" width="1.7" height="1.4" fill="#33c433"/>
<rect x="565.25" y="493.3" width="1.7" height="2.3" fill="#33c433"/>
<rect x="567.95" y="494.0" width="1.7" height="1.6" fill="#e0494f"/>
<rect x="570.65" y="492.7" width="1.7" height="2.9" fill="#e0494f"/>
<rect x="573.35" y="493.7" width="1.7" height="1.9" fill="#e0494f"/>
<rect x="576.05" y="493.1" width="1.7" height="2.5" fill="#e0494f"/>
<rect x="578.75" y="493.9" width="1.7" height="1.7" fill="#e0494f"/>
<rect x="581.45" y="493.2" width="1.7" height="2.4" fill="#e0494f"/>
<rect x="584.15" y="492.8" width="1.7" height="2.8" fill="#e0494f"/>
<rect x="586.85" y="493.3" width="1.7" height="2.3" fill="#e0494f"/>
<rect x="589.55" y="493.3" width="1.7" height="2.3" fill="#33c433"/>
<rect x="592.25" y="493.0" width="1.7" height="2.6" fill="#e0494f"/>
<rect x="594.95" y="492.3" width="1.7" height="3.3" fill="#33c433"/>
<rect x="597.65" y="492.7" width="1.7" height="2.9" fill="#33c433"/>
<rect x="600.35" y="493.7" width="1.7" height="1.9" fill="#e0494f"/>
<rect x="603.05" y="493.3" width="1.7" height="2.3" fill="#33c433"/>
<rect x="605.75" y="492.5" width="1.7" height="3.1" fill="#33c433"/>
<rect x="608.45" y="492.5" width="1.7" height="3.1" fill="#33c433"/>
<rect x="611.15" y="492.9" width="1.7" height="2.7" fill="#e0494f"/>
<rect x="613.85" y="492.7" width="1.7" height="2.9" fill="#33c433"/>
<rect x="616.55" y="493.6" width="1.7" height="2.0" fill="#e0494f"/>
<rect x="619.25" y="494.3" width="1.7" height="1.3" fill="#33c433"/>
<rect x="621.95" y="494.1" width="1.7" height="1.5" fill="#e0494f"/>
<rect x="624.65" y="492.9" width="1.7" height="2.7" fill="#e0494f"/>
<rect x="627.35" y="493.0" width="1.7" height="2.6" fill="#e0494f"/>
<rect x="630.05" y="492.8" width="1.7" height="2.8" fill="#e0494f"/>
<rect x="632.75" y="492.4" width="1.7" height="3.2" fill="#e0494f"/>
<rect x="635.45" y="493.7" width="1.7" height="1.9" fill="#33c433"/>
<rect x="638.15" y="494.1" width="1.7" height="1.5" fill="#e0494f"/>
<rect x="640.85" y="492.7" width="1.7" height="2.9" fill="#e0494f"/>
<rect x="643.55" y="494.1" width="1.7" height="1.5" fill="#e0494f"/>
<rect x="646.25" y="493.6" width="1.7" height="2.0" fill="#e0494f"/>
<rect x="648.95" y="494.3" width="1.7" height="1.3" fill="#e0494f"/>
<rect x="651.65" y="494.5" width="1.7" height="1.1" fill="#e0494f"/>
<rect x="654.35" y="493.6" width="1.7" height="2.0" fill="#33c433"/>
<rect x="657.05" y="493.6" width="1.7" height="2.0" fill="#33c433"/>
<rect x="659.75" y="492.3" width="1.7" height="3.3" fill="#33c433"/>
<rect x="662.45" y="493.5" width="1.7" height="2.1" fill="#33c433"/>
<rect x="665.15" y="493.8" width="1.7" height="1.8" fill="#33c433"/>
<rect x="667.85" y="492.9" width="1.7" height="2.7" fill="#e0494f"/>
<rect x="670.55" y="493.5" width="1.7" height="2.1" fill="#33c433"/>
<rect x="673.25" y="494.0" width="1.7" height="1.6" fill="#33c433"/>
<rect x="675.95" y="493.1" width="1.7" height="2.5" fill="#33c433"/>
<rect x="678.65" y="493.0" width="1.7" height="2.6" fill="#33c433"/>
<rect x="681.35" y="494.6" width="1.7" height="1.0" fill="#e0494f"/>
<rect x="684.05" y="491.6" width="1.7" height="4.0" fill="#33c433"/>
<rect x="686.75" y="493.0" width="1.7" height="2.6" fill="#33c433"/>
<rect x="689.45" y="491.6" width="1.7" height="4.0" fill="#33c433"/>
<rect x="692.15" y="492.4" width="1.7" height="3.2" fill="#33c433"/>
<rect x="694.85" y="493.9" width="1.7" height="1.7" fill="#33c433"/>
<rect x="697.55" y="494.4" width="1.7" height="1.2" fill="#33c433"/>
<rect x="700.25" y="494.3" width="1.7" height="1.3" fill="#e0494f"/>
<rect x="702.95" y="493.0" width="1.7" height="2.6" fill="#33c433"/>
<rect x="705.65" y="492.8" width="1.7" height="2.8" fill="#33c433"/>
<rect x="708.35" y="493.3" width="1.7" height="2.3" fill="#33c433"/>
<rect x="711.05" y="493.6" width="1.7" height="2.0" fill="#e0494f"/>
<rect x="713.75" y="493.4" width="1.7" height="2.2" fill="#33c433"/>
<rect x="716.45" y="492.9" width="1.7" height="2.7" fill="#e0494f"/>
<rect x="719.15" y="493.7" width="1.7" height="1.9" fill="#33c433"/>
<rect x="721.85" y="492.9" width="1.7" height="2.7" fill="#e0494f"/>
<rect x="724.55" y="492.8" width="1.7" height="2.8" fill="#33c433"/>
<rect x="727.25" y="494.0" width="1.7" height="1.6" fill="#33c433"/>
<rect x="729.95" y="492.5" width="1.7" height="3.1" fill="#e0494f"/>
<rect x="732.65" y="492.4" width="1.7" height="3.2" fill="#e0494f"/>
<rect x="735.35" y="493.7" width="1.7" height="1.9" fill="#33c433"/>
<rect x="738.05" y="492.3" width="1.7" height="3.3" fill="#e0494f"/>
<rect x="740.75" y="494.3" width="1.7" height="1.3" fill="#e0494f"/>
<rect x="743.45" y="494.0" width="1.7" height="1.6" fill="#e0494f"/>
<rect x="746.15" y="493.1" width="1.7" height="2.5" fill="#e0494f"/>
<rect x="748.85" y="494.0" width="1.7" height="1.6" fill="#e0494f"/>
<rect x="751.55" y="493.3" width="1.7" height="2.3" fill="#33c433"/>
<rect x="754.25" y="493.1" width="1.7" height="2.5" fill="#33c433"/>
<rect x="756.95" y="494.1" width="1.7" height="1.5" fill="#e0494f"/>
<rect x="759.65" y="488.1" width="1.7" height="7.5" fill="#e0494f"/>
<rect x="762.35" y="492.3" width="1.7" height="3.3" fill="#33c433"/>
<rect x="765.05" y="489.6" width="1.7" height="6.0" fill="#33c433"/>
<rect x="767.75" y="483.6" width="1.7" height="12.0" fill="#e0494f"/>
<rect x="770.45" y="490.6" width="1.7" height="5.0" fill="#33c433"/>
<rect x="773.15" y="490.6" width="1.7" height="5.0" fill="#e0494f"/>
<rect x="775.85" y="492.6" width="1.7" height="3.0" fill="#e0494f"/>
<rect x="778.55" y="494.1" width="1.7" height="1.5" fill="#33c433"/>
<rect x="781.25" y="492.9" width="1.7" height="2.7" fill="#33c433"/>
<rect x="783.95" y="493.4" width="1.7" height="2.2" fill="#e0494f"/>
<rect x="786.65" y="492.8" width="1.7" height="2.8" fill="#33c433"/>
<rect x="789.35" y="491.1" width="1.7" height="4.5" fill="#33c433"/>
<rect x="792.05" y="492.2" width="1.7" height="3.4" fill="#33c433"/>
<rect x="794.75" y="494.4" width="1.7" height="1.2" fill="#33c433"/>
<rect x="797.45" y="492.4" width="1.7" height="3.2" fill="#33c433"/>
<rect x="800.15" y="492.2" width="1.7" height="3.4" fill="#33c433"/>
<rect x="802.85" y="493.3" width="1.7" height="2.3" fill="#33c433"/>
<rect x="805.55" y="492.4" width="1.7" height="3.2" fill="#33c433"/>
<rect x="808.25" y="492.7" width="1.7" height="2.9" fill="#33c433"/>
<rect x="810.95" y="492.4" width="1.7" height="3.2" fill="#e0494f"/>
<rect x="813.65" y="494.2" width="1.7" height="1.4" fill="#33c433"/>
<rect x="816.35" y="493.9" width="1.7" height="1.7" fill="#e0494f"/>
<rect x="819.05" y="494.5" width="1.7" height="1.1" fill="#33c433"/>
<rect x="821.75" y="493.6" width="1.7" height="2.0" fill="#e0494f"/>
<rect x="824.45" y="492.8" width="1.7" height="2.8" fill="#e0494f"/>
<rect x="827.15" y="493.9" width="1.7" height="1.7" fill="#e0494f"/>
<!-- panel separators -->
<g stroke="#6d93dc" stroke-width="1">
<line x1="19" y1="430.5" x2="880" y2="430.5"/>
<line x1="19" y1="476.5" x2="880" y2="476.5"/>
</g>
<line x1="854.6" y1="38" x2="854.6" y2="496" stroke="#7089c4" stroke-width="0.8"/>
<line x1="879.6" y1="38" x2="879.6" y2="505" stroke="#7089c4" stroke-width="0.8"/>
<!-- axis ticks -->
<g stroke="#7089c4" stroke-width="0.8">
<line x1="854.5" y1="49.5" x2="857" y2="49.5"/><line x1="854.5" y1="88.5" x2="857" y2="88.5"/><line x1="854.5" y1="127.5" x2="857" y2="127.5"/><line x1="854.5" y1="165.5" x2="857" y2="165.5"/><line x1="854.5" y1="204.5" x2="857" y2="204.5"/><line x1="854.5" y1="242.5" x2="857" y2="242.5"/><line x1="854.5" y1="280.5" x2="857" y2="280.5"/><line x1="854.5" y1="319.5" x2="857" y2="319.5"/><line x1="854.5" y1="357.5" x2="857" y2="357.5"/><line x1="854.5" y1="395.5" x2="857" y2="395.5"/><line x1="854.5" y1="448.5" x2="857" y2="448.5"/><line x1="854.5" y1="480.5" x2="857" y2="480.5"/>
</g>
<g font-size="6.6" fill="#222">
<text x="859" y="52.5">4.6</text><text x="859" y="91.3">4.4</text><text x="859" y="129.8">4.2</text>
<text x="859" y="168.2" font-weight="bold">4</text><text x="859" y="206.8">3.8</text><text x="859" y="245">3.6</text>
<text x="859" y="283.3">3.4</text><text x="859" y="321.6">3.2</text><text x="859" y="359.8" font-weight="bold">3</text><text x="859" y="398">2.8</text>
<text x="860" y="450.8">50</text><text x="860" y="482.8">50M</text>
</g>
<rect x="857" y="218.4" width="18.6" height="8.2" fill="#ffd800" stroke="#a88c00" stroke-width="0.6"/>
<text x="858.2" y="225" font-size="6.5" fill="#111">3.705</text>
<rect x="856.5" y="454.6" width="23" height="8.4" fill="#fff" stroke="#3f6bd0" stroke-width="0.8"/>
<text x="858" y="461.4" font-size="6.6" fill="#111">33.635</text>
<rect x="856.5" y="486.4" width="23" height="8.2" fill="#fff" stroke="#3f6bd0" stroke-width="0.8"/>
<text x="858" y="493.1" font-size="6.6" fill="#e0484f">9,960k</text>
<!-- month labels -->
<g font-size="6.6" fill="#222" text-anchor="middle">
<text x="65" y="503">Nov</text><text x="121" y="503">Dec</text><text x="176" y="504" font-weight="bold" font-size="7.6">2025</text>
<text x="234.5" y="503">Feb</text><text x="288.6" y="503">Mar</text><text x="345" y="503">Apr</text><text x="400" y="503">May</text>
<text x="456" y="503">Jun</text><text x="512.5" y="503">Jul</text><text x="574.4" y="503">Aug</text><text x="631" y="503">Sept</text>
<text x="690.6" y="503">Oct</text><text x="752.5" y="503">Nov</text><text x="806" y="503">Dec</text>
</g>
<text x="19.5" y="429" font-size="6.6" fill="#222">ProRealTime.com - End of Day</text>
<!-- 13 label -->
<rect x="435.3" y="141.3" width="13" height="13.2" rx="1.2" fill="#fff" stroke="#8fabf0" stroke-width="0.9"/>
<text x="441.9" y="150.4" font-size="6.8" fill="#222" text-anchor="middle">13</text>
<!-- small info icons -->
<rect x="824.5" y="421.5" width="6" height="6" fill="#fff" stroke="#9aa" stroke-width="0.6"/>
<text x="827.5" y="426.8" font-size="5.6" font-weight="bold" fill="#223" text-anchor="middle">i</text>
<rect x="396.5" y="422" width="5.5" height="3" fill="#5b8ee0"/><rect x="396.5" y="425" width="5.5" height="3" fill="#e8c860"/>
</svg>

<div id="menubar" class="abs">
  <div class="abs" style="left:0;top:0;width:880px;height:1.4px;background:#3866cc"></div>
  <div class="abs" style="left:1px;top:0.6px;width:66.5px;height:21.4px;background:#000"></div>
  <svg class="abs" style="left:6px;top:6px" width="12" height="11" viewBox="0 0 12 11"><rect x="1" y="5" width="1.6" height="5" fill="#3f9ad6"/><rect x="4" y="3.2" width="1.6" height="5" fill="#3f9ad6"/><rect x="7" y="1" width="1.6" height="5.4" fill="#3f9ad6"/></svg>
  <div class="t" style="left:20.6px;top:5.4px;font-size:6.8px;font-weight:bold;color:#fff">ProRealTime</div>
  <div class="t" style="left:20.8px;top:13.2px;font-size:6.6px;color:#a9c3e6">Complete</div>
  <div class="t m" style="left:75.6px">File</div>
  <div class="t m" style="left:93.8px">Display</div>
  <div class="t m" style="left:122.6px">Trading</div>
  <div class="t m" style="left:151.6px">Social</div>
  <div class="t m" style="left:177.6px">Objects</div>
  <div class="t m" style="left:208.6px">Settings</div>
  <div class="abs" style="left:235.5px;top:1px;width:0.8px;height:21px;background:#4a7bd8"></div>
  <svg class="abs" style="left:238.5px;top:6px" width="12" height="11" viewBox="0 0 12 11"><path d="M2.2,6 A3.6,3.8 0 0 1 9.4,6" fill="none" stroke="#1a2440" stroke-width="0.9"/><ellipse cx="2" cy="6.6" rx="1" ry="1.7" fill="none" stroke="#1a2440" stroke-width="0.8"/><ellipse cx="9.6" cy="6.6" rx="1" ry="1.7" fill="none" stroke="#1a2440" stroke-width="0.8"/><path d="M9.6,8.3 Q9,10 6.2,9.9" fill="none" stroke="#1a2440" stroke-width="0.8"/></svg>
  <div class="t m" style="left:253px">Help</div>
  <div class="abs" style="left:268.3px;top:1px;width:0.8px;height:21px;background:#4a7bd8"></div>
  <svg class="abs" style="left:273px;top:5.5px" width="7" height="11" viewBox="0 0 7 11"><rect x="1.4" y="0.8" width="3.6" height="4" rx="1.5" fill="none" stroke="#f4f0e0" stroke-width="1.1"/><rect x="1.4" y="5.8" width="3.6" height="4" rx="1.5" fill="none" stroke="#f4f0e0" stroke-width="1.1"/><line x1="3.2" y1="3.5" x2="3.2" y2="7" stroke="#f4f0e0" stroke-width="1"/></svg>
  <div class="abs" style="left:285.7px;top:3px;width:106px;height:15.4px;background:#fff;border-radius:2px"></div>
  <div class="t" style="left:288px;top:7.8px;font-size:6.8px;font-style:italic;color:#9a9a9a">Search...</div>
  <svg class="abs" style="left:381px;top:5.5px" width="10" height="10" viewBox="0 0 10 10"><circle cx="5.8" cy="3.8" r="2.6" fill="none" stroke="#333" stroke-width="0.9"/><line x1="4" y1="5.8" x2="1.2" y2="8.8" stroke="#222" stroke-width="1.3"/></svg>
  <div class="abs" style="left:396px;top:1px;width:0.8px;height:21px;background:#4a7bd8"></div>
  <svg class="abs" style="left:400.5px;top:5.1px" width="13" height="13" viewBox="0 0 14 14"><g transform="rotate(-45 7 7)"><rect x="0.6" y="4.6" width="12.8" height="4.8" fill="#6d9cf0" stroke="#2c4490" stroke-width="0.9"/><path d="M3,4.8 V6.8 M5,4.8 V7.6 M7,4.8 V6.8 M9,4.8 V7.6 M11,4.8 V6.8" stroke="#2c4490" stroke-width="0.6"/></g></svg>
<svg class="abs" style="left:417.0px;top:5.8px" width="11.6" height="11.6" viewBox="0 0 14 14"><line x1="3.6" y1="7" x2="10.4" y2="7" stroke="#17264a" stroke-width="1.2"/><circle cx="2.6" cy="7" r="1.4" fill="none" stroke="#17264a" stroke-width="1"/><circle cx="11.4" cy="7" r="1.4" fill="none" stroke="#17264a" stroke-width="1"/></svg>
<svg class="abs" style="left:432.2px;top:5.8px" width="11.6" height="11.6" viewBox="0 0 14 14"><line x1="4" y1="10" x2="10" y2="4" stroke="#17264a" stroke-width="1.2"/><circle cx="3.2" cy="10.8" r="1.3" fill="none" stroke="#17264a" stroke-width="1"/><circle cx="10.8" cy="3.2" r="1.3" fill="none" stroke="#17264a" stroke-width="1"/></svg>
<svg class="abs" style="left:447.2px;top:5.1px" width="13" height="13" viewBox="0 0 14 14"><line x1="0.5" y1="7" x2="13.5" y2="7" stroke="#17264a" stroke-width="1.1"/></svg>
<svg class="abs" style="left:462.9px;top:5.1px" width="13" height="13" viewBox="0 0 14 14"><path d="M2.5,6.2 L12.5,3.6 M1.5,10.2 L11.5,7.6" stroke="#17264a" stroke-width="1.1" fill="none"/><path d="M5,5 L8,10 " stroke="#1f3fd0" stroke-width="0.8"/><path d="M0.4,10.6 L2.6,9.6 M11,7.8 L13.4,7" stroke="#1f3fd0" stroke-width="1.4"/></svg>
<svg class="abs" style="left:480.0px;top:5.8px" width="11.6" height="11.6" viewBox="0 0 14 14"><line x1="3.4" y1="10.6" x2="10" y2="4" stroke="#e02424" stroke-width="1.3"/><path d="M12,2 L11.2,6 L8,2.8Z" fill="#e02424"/><circle cx="2.8" cy="11.2" r="1.2" fill="none" stroke="#e02424" stroke-width="0.8"/></svg>
<svg class="abs" style="left:495.4px;top:5.8px" width="11.6" height="11.6" viewBox="0 0 14 14"><line x1="7" y1="3.6" x2="7" y2="10" stroke="#168a2e" stroke-width="1.3"/><path d="M7,0.8 L9,4 L5,4Z" fill="#168a2e"/><circle cx="7" cy="11.4" r="1.3" fill="none" stroke="#168a2e" stroke-width="0.8"/></svg>
<svg class="abs" style="left:510.7px;top:5.8px" width="11.6" height="11.6" viewBox="0 0 14 14"><line x1="3.4" y1="10.6" x2="10" y2="4" stroke="#168a2e" stroke-width="1.3"/><path d="M12,2 L11.2,6 L8,2.8Z" fill="#168a2e"/><circle cx="2.8" cy="11.2" r="1.2" fill="none" stroke="#168a2e" stroke-width="0.8"/></svg>
<svg class="abs" style="left:526.1px;top:5.1px" width="13" height="13" viewBox="0 0 14 14"><rect x="2" y="2.4" width="9" height="6.6" fill="#dfe8fb" stroke="#17264a" stroke-width="0.5"/><path d="M2,4.6 H11 M2,6.8 H11 M2,10.6 H9" stroke="#17264a" stroke-width="1"/><text x="6.5" y="7.6" font-size="4.6" font-weight="bold" fill="#17264a" text-anchor="middle" font-family="Liberation Sans, sans-serif">%</text><path d="M11.4,8.4 V12.4 M10.2,11 L11.4,12.6 L12.6,11" stroke="#1f3fd0" stroke-width="0.9" fill="none"/></svg>
<svg class="abs" style="left:542.2px;top:5.8px" width="11.6" height="11.6" viewBox="0 0 14 14"><path d="M5,1.6 H9 V6.6 H11.8 L7,12.4 L2.2,6.6 H5Z" fill="#f01818"/></svg>
<svg class="abs" style="left:557.7px;top:5.8px" width="11.6" height="11.6" viewBox="0 0 14 14"><path d="M5,12.4 H9 V7.4 H11.8 L7,1.6 L2.2,7.4 H5Z" fill="#1fae2e" stroke="#0f7a1c" stroke-width="0.5"/></svg>
<div class="abs" style="left:571.6px;top:4.4px;width:14.4px;height:14.4px;background:#7c9fe6;border:0.6px solid #6a8fdc;box-sizing:border-box;border-radius:1px"></div>
<svg class="abs" style="left:572.3px;top:5.1px" width="13" height="13" viewBox="0 0 14 14"><path d="M4.6,1.8 L4.6,11 L6.8,9 L8.4,12.4 L9.8,11.8 L8.2,8.6 L11,8.4Z" fill="#f4f4f4" stroke="#707890" stroke-width="0.6"/></svg>
<svg class="abs" style="left:587.8px;top:5.1px" width="13" height="13" viewBox="0 0 14 14"><rect x="2.4" y="2.4" width="9.2" height="9.2" rx="1" fill="#d6e2fb" stroke="#4f79d8" stroke-width="0.6"/><text x="7" y="9.8" font-size="7.6" font-weight="bold" fill="#0a0a0a" text-anchor="middle" font-family="Liberation Sans, sans-serif">T</text></svg>
<svg class="abs" style="left:603.5px;top:5.1px" width="13" height="13" viewBox="0 0 14 14"><ellipse cx="7" cy="7.4" rx="5.4" ry="3.6" fill="none" stroke="#17264a" stroke-width="1" transform="rotate(-12 7 7)"/><path d="M10.6,3 L13,1.6 L12.4,4.4Z M3.2,11.4 L0.8,12.6 L1.4,10Z" fill="#1f3fd0"/></svg>
<svg class="abs" style="left:619.1px;top:5.1px" width="13" height="13" viewBox="0 0 14 14"><path d="M3.4,4.4 H10.6 L9.8,12.4 H4.2Z" fill="#dcd8c8" stroke="#3a3830" stroke-width="0.8"/><rect x="2.8" y="2.8" width="8.4" height="1.7" fill="#ece8da" stroke="#3a3830" stroke-width="0.7"/><rect x="5.6" y="1.4" width="2.8" height="1.4" fill="#8a887e"/><path d="M5.4,5.6 V11.4 M7,5.6 V11.4 M8.6,5.6 V11.4" stroke="#6a6860" stroke-width="0.6"/></svg>
<svg class="abs" style="left:634.5px;top:5.1px" width="13" height="13" viewBox="0 0 14 14"><path d="M7,1.6 C4.6,1.6 4,4 3.8,6.6 C3.7,8.6 2.6,9.4 1.6,10.4 H12.4 C11.4,9.4 10.3,8.6 10.2,6.6 C10,4 9.4,1.6 7,1.6Z" fill="#ffe020" stroke="#c8a400" stroke-width="0.5"/><circle cx="7" cy="11.6" r="1.3" fill="#e8c000"/><path d="M1,5 L2.4,5.6 M13,5 L11.6,5.6" stroke="#ffe020" stroke-width="0.8"/></svg>
  <!-- right icons -->
  <svg class="abs" style="left:769px;top:5.5px" width="15" height="13" viewBox="0 0 15 13"><line x1="2.2" y1="1.5" x2="2.2" y2="11" stroke="#c9a000" stroke-width="0.9"/><path d="M2.6,1.6 L10.4,1.6 L10.4,7 L2.6,7 Z" fill="#ffd21a"/><circle cx="9.8" cy="9.4" r="2.7" fill="#e0281e"/><text x="9.8" y="11.2" font-size="4.6" fill="#fff" text-anchor="middle" font-weight="bold" font-family="Liberation Sans, sans-serif">2</text></svg>
  <svg class="abs" style="left:793px;top:5px" width="14" height="14" viewBox="0 0 14 14"><rect x="3.2" y="3.4" width="7.4" height="7" fill="#cfe0ff"/><path d="M2,7 A5,5 0 0 1 10.5,3.2" fill="none" stroke="#1f50b8" stroke-width="1.6"/><path d="M12,7 A5,5 0 0 1 3.5,10.8" fill="none" stroke="#1f50b8" stroke-width="1.6"/><path d="M9,1.2 L12.2,3.4 L9,5.4Z" fill="#1f50b8"/><path d="M5,8.6 L1.8,10.6 L5,12.8Z" fill="#1f50b8"/></svg>
  <svg class="abs" style="left:813.5px;top:6.5px" width="10" height="10" viewBox="0 0 10 10"><rect x="0.3" y="0.5" width="9.2" height="9" rx="0.8" fill="#0c0e14"/><rect x="1.4" y="6.6" width="7" height="1.8" fill="#9fb4d8"/></svg>
  <svg class="abs" style="left:830.5px;top:3.6px" width="46" height="9.2" viewBox="0 0 38 8" preserveAspectRatio="none"><g stroke="#86a8ec" stroke-width="0.8" fill="none"><rect x="1" y="1" width="5.5" height="5.5"/><path d="M2.5,5 L5,2.5 M10,1 H16 M13,1 V6 M11.5,4.5 L13,6 L14.5,4.5 M19,3.5 H25 M19,3.5 L21,2 M19,3.5 L21,5 M28,6.3 H32"/></g><path d="M33.6,0.8 L37.4,6.4 M37.4,0.8 L33.6,6.4" stroke="#a9c2f2" stroke-width="0.9"/></svg>
  <div class="t" style="left:843.5px;top:13.6px;font-size:6.4px;color:#3b5fae">Thu 11 Dec</div>
</div>
<div id="row2" class="abs">
  <svg class="abs" style="left:3px;top:2px" width="11" height="10" viewBox="0 0 11 10"><g fill="#5fa8dc"><rect x="1" y="5" width="1.4" height="3.6"/><rect x="3.4" y="3.6" width="1.4" height="3.6"/><rect x="5.8" y="1.6" width="1.4" height="4.4"/><rect x="8.2" y="2.6" width="1.4" height="3.4"/></g></svg>
  <div class="abs" style="left:15px;top:0;width:0.8px;height:14px;background:#5684e0"></div>
  <svg class="abs" style="left:18.5px;top:1.5px" width="8" height="13" viewBox="0 0 8 13"><rect x="2" y="0.8" width="3.2" height="4" rx="1.4" fill="none" stroke="#f4f0e0" stroke-width="1"/><rect x="2" y="5.4" width="3.2" height="4" rx="1.4" fill="none" stroke="#f4f0e0" stroke-width="1"/><line x1="3.6" y1="3" x2="3.6" y2="7" stroke="#ddd" stroke-width="0.8"/><circle cx="4.2" cy="10.6" r="1.9" fill="#2f5fc8"/><path d="M3.2,10.6 L4,11.4 L5.3,9.8" stroke="#fff" stroke-width="0.6" fill="none"/></svg>
  <div class="t b" style="left:29.8px">EDP</div>
  <svg class="abs" style="left:47px;top:5.2px" width="5" height="4" viewBox="0 0 5 4"><path d="M0.6,0.8 L2.5,2.8 L4.4,0.8" fill="none" stroke="#10182e" stroke-width="1.15"/></svg>
  <div class="abs" style="left:56.8px;top:0.2px;width:30.6px;height:13.4px;background:#a4c3fa"></div>
  <div class="t b" style="left:59.4px">1 day</div>
  <svg class="abs" style="left:80px;top:5.2px" width="5" height="4" viewBox="0 0 5 4"><path d="M0.6,0.8 L2.5,2.8 L4.4,0.8" fill="none" stroke="#10182e" stroke-width="1.15"/></svg>
  <div class="t b" style="left:90.6px">300 units</div>
  <svg class="abs" style="left:123.4px;top:5.2px" width="5" height="4" viewBox="0 0 5 4"><path d="M0.6,0.8 L2.5,2.8 L4.4,0.8" fill="none" stroke="#10182e" stroke-width="1.15"/></svg>
  <div class="abs" style="left:130.6px;top:0;width:0.8px;height:14px;background:#5684e0"></div>
  <svg class="abs" style="left:134px;top:1.5px" width="13" height="12" viewBox="0 0 13 12"><path d="M0.6,3.6 Q2.6,0 4.6,2.6 T8.6,5 T12.4,3" fill="none" stroke="#1f9a3a" stroke-width="0.9"/><path d="M0.6,2.2 Q3,2 5,5 T9,5.4 T12.4,5" fill="none" stroke="#e03a3a" stroke-width="0.8"/><g fill="#22b43a"><rect x="1" y="8.4" width="1.6" height="2.8"/><rect x="3.2" y="9.2" width="1.6" height="2"/><rect x="5.4" y="8.8" width="1.6" height="2.4"/><rect x="7.6" y="9.4" width="1.6" height="1.8"/><rect x="9.8" y="8.2" width="1.6" height="3"/></g></svg>
  <div class="t b" style="left:149.8px">Indicators</div>
  <div class="abs" style="left:183.6px;top:0;width:0.8px;height:14px;background:#5684e0"></div>
  <svg class="abs" style="left:187px;top:5.2px" width="5" height="4" viewBox="0 0 5 4"><path d="M0.6,0.8 L2.5,2.8 L4.4,0.8" fill="none" stroke="#10182e" stroke-width="1.15"/></svg>
  <div class="abs" style="left:197.8px;top:3.6px;width:6.6px;height:7.2px;background:#f6f2e4;border-radius:0.8px"></div>
  <div class="t" style="left:200.2px;top:4.6px;font-size:6px;font-weight:bold;color:#d8b040">i</div>
  <div class="t" style="left:208.8px;top:3.6px;font-size:6.4px;color:#23345e">EDP</div>
  <div class="t" style="left:226px;top:3.5px;font-size:6.45px;font-weight:bold;color:#c8202a">3.705</div>
  <div class="abs" style="left:246.4px;top:2.6px;width:24.8px;height:9px;background:#ef3f3f"></div>
  <div class="t" style="left:248.8px;top:3.6px;font-size:6.3px;font-weight:bold;color:#fff">-1.98%</div>
  <div class="t b" style="left:274px;top:3.4px;font-size:6.7px">11 Dec 2025</div>
  <div class="abs" style="left:317.2px;top:4.2px;width:4.6px;height:4.6px;background:#dcdad2;border:0.7px solid #c4d2ee;border-radius:1.2px;box-sizing:border-box"></div>
  <!-- right -->
  <div class="abs" style="left:832.4px;top:0;width:0.8px;height:14px;background:#5684e0"></div>
  <div class="abs" style="left:847.6px;top:0;width:0.8px;height:14px;background:#5684e0"></div>
  <svg class="abs" style="left:834px;top:1.6px" width="12" height="11" viewBox="0 0 12 11"><path d="M2.6,5.8 A3.6,3.6 0 0 1 8,2" fill="none" stroke="#e02a2a" stroke-width="1.5"/><path d="M0.6,4.6 L3,8 L5,4.4Z" fill="#e02a2a"/><path d="M9.6,5 A3.6,3.6 0 0 1 4.4,9" fill="none" stroke="#1ea83a" stroke-width="1.5"/><path d="M7.4,6.4 L9.6,3 L11.8,6.4Z" fill="#1ea83a"/></svg>
  <svg class="abs" style="left:850px;top:3px" width="27" height="8" viewBox="0 0 27 8"><g stroke="#b4cbf6" stroke-width="0.9" fill="none"><path d="M1.5,6.6 H6.5"/><rect x="10" y="2.8" width="4.2" height="3.8"/><path d="M11.6,2.8 V1 H16 V4.8 H14.2"/><path d="M20.6,1 L25.6,6.8 M25.6,1 L20.6,6.8"/></g></svg>
</div>
<div id="legend" class="abs"><div class="abs" style="left:0;top:0;width:21px;height:10.2px;background:#bcd0f8"></div>
  <div class="abs" style="left:1.6px;top:0.8px;width:7.4px;height:7.8px;background:#f4f6fb;border:0.5px solid #a8b8d8;box-sizing:border-box"></div>
  <svg class="abs" style="left:2.6px;top:1.8px" width="6" height="6" viewBox="0 0 6 6"><path d="M3,5.6 L0.4,2.8 H2 V0.6 H4 V2.8 H5.6Z" fill="#e02a2a"/></svg>
  <div class="abs" style="left:11.4px;top:0.8px;width:7.4px;height:7.8px;background:#f4f6fb;border:0.5px solid #a8b8d8;box-sizing:border-box"></div>
  <svg class="abs" style="left:12.4px;top:1.8px" width="6" height="6" viewBox="0 0 6 6"><path d="M3,0.4 L0.4,3.2 H2 V5.4 H4 V3.2 H5.6Z" fill="#1fa83a"/></svg>
  <div class="lg" style="left:20.6px;width:48.2px"><div class="abs" style="left:2.2px;top:1.4px;width:3px;height:6px;background:#34c04a"></div><div class="abs" style="left:5.2px;top:1.4px;width:3px;height:6px;background:#e85a4a"></div><div class="t" style="left:9.4px;top:1.4px">Price</div><div class="t" style="left:27.4px;top:1.4px">3.705</div></div>
  <div class="lg" style="left:68.8px;width:11.4px"><svg class="abs" style="left:1.8px;top:1.4px" width="8" height="7" viewBox="0 0 8 7"><g stroke="#222" stroke-width="0.9" fill="none"><path d="M2.6,1.2 H7.4"/><path d="M2.6,3.4 H7.4"/><path d="M2.6,5.6 H7.4"/><path d="M0.4,1.2 H1.6"/><path d="M0.4,3.4 H1.6"/><path d="M0.4,5.6 H1.6"/></g></svg></div>
  <div class="lg" style="left:80.2px;width:67.8px"><div class="abs" style="left:2.6px;top:1.5px;width:5.8px;height:5.8px;background:#f62a2a"></div><div class="t" style="left:9.8px;top:1.4px">EMA (200)</div><div class="t" style="left:44.2px;top:1.4px;color:#e8404a">3.7386</div></div>
  <div class="lg" style="left:148px;width:40px"><div class="abs" style="left:2.2px;top:1.5px;width:5.4px;height:5.4px;background:#e8effc;border:0.5px solid #8a9ab8;box-sizing:border-box"></div><div class="t" style="left:9.5px;top:1.4px">EMA (14)</div></div>
  <div class="lg" style="left:188px;width:64px"><div class="abs" style="left:2.4px;top:1.5px;width:5.8px;height:5.8px;background:#1f44e8"></div><div class="t" style="left:9.5px;top:1.4px">SMA (50)</div><div class="t" style="left:40px;top:1.4px;color:#2f55d8">4.0632</div></div>
</div>
<div id="side" class="abs"><svg class="abs" style="left:2.9px;top:2.4px" width="12.5" height="12.5" viewBox="0 0 14 14"><g transform="rotate(-45 7 7)"><rect x="0.6" y="4.6" width="12.8" height="4.8" fill="#6d9cf0" stroke="#2c4490" stroke-width="0.9"/><path d="M3,4.8 V6.8 M5,4.8 V7.6 M7,4.8 V6.8 M9,4.8 V7.6 M11,4.8 V6.8" stroke="#2c4490" stroke-width="0.6"/></g></svg>
<svg class="abs" style="left:3.6px;top:19.4px" width="11.2" height="11.2" viewBox="0 0 14 14"><line x1="3.6" y1="7" x2="10.4" y2="7" stroke="#17264a" stroke-width="1.2"/><circle cx="2.6" cy="7" r="1.4" fill="none" stroke="#17264a" stroke-width="1"/><circle cx="11.4" cy="7" r="1.4" fill="none" stroke="#17264a" stroke-width="1"/></svg>
<svg class="abs" style="left:3.6px;top:34.8px" width="11.2" height="11.2" viewBox="0 0 14 14"><line x1="4" y1="10" x2="10" y2="4" stroke="#17264a" stroke-width="1.2"/><circle cx="3.2" cy="10.8" r="1.3" fill="none" stroke="#17264a" stroke-width="1"/><circle cx="10.8" cy="3.2" r="1.3" fill="none" stroke="#17264a" stroke-width="1"/></svg>
<svg class="abs" style="left:2.9px;top:50.2px" width="12.5" height="12.5" viewBox="0 0 14 14"><line x1="0.5" y1="7" x2="13.5" y2="7" stroke="#17264a" stroke-width="1.1"/></svg>
<svg class="abs" style="left:2.9px;top:65.5px" width="12.5" height="12.5" viewBox="0 0 14 14"><path d="M2.5,6.2 L12.5,3.6 M1.5,10.2 L11.5,7.6" stroke="#17264a" stroke-width="1.1" fill="none"/><path d="M5,5 L8,10 " stroke="#1f3fd0" stroke-width="0.8"/><path d="M0.4,10.6 L2.6,9.6 M11,7.8 L13.4,7" stroke="#1f3fd0" stroke-width="1.4"/></svg>
<svg class="abs" style="left:3.6px;top:81.9px" width="11.2" height="11.2" viewBox="0 0 14 14"><line x1="3.4" y1="10.6" x2="10" y2="4" stroke="#e02424" stroke-width="1.3"/><path d="M12,2 L11.2,6 L8,2.8Z" fill="#e02424"/><circle cx="2.8" cy="11.2" r="1.2" fill="none" stroke="#e02424" stroke-width="0.8"/></svg>
<svg class="abs" style="left:3.6px;top:97.4px" width="11.2" height="11.2" viewBox="0 0 14 14"><line x1="7" y1="3.6" x2="7" y2="10" stroke="#168a2e" stroke-width="1.3"/><path d="M7,0.8 L9,4 L5,4Z" fill="#168a2e"/><circle cx="7" cy="11.4" r="1.3" fill="none" stroke="#168a2e" stroke-width="0.8"/></svg>
<svg class="abs" style="left:3.6px;top:113.0px" width="11.2" height="11.2" viewBox="0 0 14 14"><line x1="3.4" y1="10.6" x2="10" y2="4" stroke="#168a2e" stroke-width="1.3"/><path d="M12,2 L11.2,6 L8,2.8Z" fill="#168a2e"/><circle cx="2.8" cy="11.2" r="1.2" fill="none" stroke="#168a2e" stroke-width="0.8"/></svg>
<svg class="abs" style="left:2.9px;top:127.2px" width="12.5" height="12.5" viewBox="0 0 14 14"><rect x="2" y="2.4" width="9" height="6.6" fill="#dfe8fb" stroke="#17264a" stroke-width="0.5"/><path d="M2,4.6 H11 M2,6.8 H11 M2,10.6 H9" stroke="#17264a" stroke-width="1"/><text x="6.5" y="7.6" font-size="4.6" font-weight="bold" fill="#17264a" text-anchor="middle" font-family="Liberation Sans, sans-serif">%</text><path d="M11.4,8.4 V12.4 M10.2,11 L11.4,12.6 L12.6,11" stroke="#1f3fd0" stroke-width="0.9" fill="none"/></svg>
<svg class="abs" style="left:3.6px;top:144.4px" width="11.2" height="11.2" viewBox="0 0 14 14"><path d="M5,1.6 H9 V6.6 H11.8 L7,12.4 L2.2,6.6 H5Z" fill="#f01818"/></svg>
<svg class="abs" style="left:3.6px;top:159.4px" width="11.2" height="11.2" viewBox="0 0 14 14"><path d="M5,12.4 H9 V7.4 H11.8 L7,1.6 L2.2,7.4 H5Z" fill="#1fae2e" stroke="#0f7a1c" stroke-width="0.5"/></svg>
<div class="abs" style="left:2px;top:174.3px;width:14.6px;height:14.4px;background:#7c9fe6;border:0.6px solid #6a8fdc;box-sizing:border-box;border-radius:1px"></div>
<svg class="abs" style="left:2.9px;top:175.2px" width="12.5" height="12.5" viewBox="0 0 14 14"><path d="M4.6,1.8 L4.6,11 L6.8,9 L8.4,12.4 L9.8,11.8 L8.2,8.6 L11,8.4Z" fill="#f4f4f4" stroke="#707890" stroke-width="0.6"/></svg>
<svg class="abs" style="left:2.9px;top:190.3px" width="12.5" height="12.5" viewBox="0 0 14 14"><rect x="2.4" y="2.4" width="9.2" height="9.2" rx="1" fill="#d6e2fb" stroke="#4f79d8" stroke-width="0.6"/><text x="7" y="9.8" font-size="7.6" font-weight="bold" fill="#0a0a0a" text-anchor="middle" font-family="Liberation Sans, sans-serif">T</text></svg>
<svg class="abs" style="left:2.9px;top:206.8px" width="12.5" height="12.5" viewBox="0 0 14 14"><ellipse cx="7" cy="7.4" rx="5.4" ry="3.6" fill="none" stroke="#17264a" stroke-width="1" transform="rotate(-12 7 7)"/><path d="M10.6,3 L13,1.6 L12.4,4.4Z M3.2,11.4 L0.8,12.6 L1.4,10Z" fill="#1f3fd0"/></svg>
<svg class="abs" style="left:2.9px;top:221.8px" width="12.5" height="12.5" viewBox="0 0 14 14"><path d="M3.4,4.4 H10.6 L9.8,12.4 H4.2Z" fill="#dcd8c8" stroke="#3a3830" stroke-width="0.8"/><rect x="2.8" y="2.8" width="8.4" height="1.7" fill="#ece8da" stroke="#3a3830" stroke-width="0.7"/><rect x="5.6" y="1.4" width="2.8" height="1.4" fill="#8a887e"/><path d="M5.4,5.6 V11.4 M7,5.6 V11.4 M8.6,5.6 V11.4" stroke="#6a6860" stroke-width="0.6"/></svg>
<svg class="abs" style="left:2.9px;top:237.8px" width="12.5" height="12.5" viewBox="0 0 14 14"><path d="M7,1.6 C4.6,1.6 4,4 3.8,6.6 C3.7,8.6 2.6,9.4 1.6,10.4 H12.4 C11.4,9.4 10.3,8.6 10.2,6.6 C10,4 9.4,1.6 7,1.6Z" fill="#ffe020" stroke="#c8a400" stroke-width="0.5"/><circle cx="7" cy="11.6" r="1.3" fill="#e8c000"/><path d="M1,5 L2.4,5.6 M13,5 L11.6,5.6" stroke="#ffe020" stroke-width="0.8"/></svg>
<div class="abs" style="left:0;top:429.2px;width:18.5px;height:0.8px;background:#5683dc"></div>
<svg class="abs" style="left:2px;top:430px" width="15.5" height="16.5" viewBox="0 0 15 16"><rect x="4.4" y="2" width="7.4" height="9.6" fill="#f4f4f4" stroke="#666" stroke-width="0.5"/><rect x="5.2" y="6.4" width="3" height="3.4" fill="#d04040"/><rect x="5.2" y="3.6" width="4" height="1" fill="#7a9ad8"/><circle cx="3.6" cy="3.4" r="2.6" fill="#1f9a3a"/><text x="3.4" y="4.8" font-size="4.2" fill="#fff" text-anchor="middle" font-weight="bold" font-family="Liberation Sans, sans-serif">1</text><path d="M8,9 L12,12 M12,9 L8.6,12.6" stroke="#222" stroke-width="1"/><circle cx="12.6" cy="8.6" r="1" fill="#fff" stroke="#222" stroke-width="0.5"/><circle cx="12.6" cy="12.8" r="1" fill="#fff" stroke="#222" stroke-width="0.5"/><path d="M10.6,14.2 H14 L12.3,15.8Z" fill="#111"/></svg>
<svg class="abs" style="left:3px;top:456px" width="13" height="10" viewBox="0 0 13 10"><circle cx="2.4" cy="3" r="1.1" fill="#111"/><circle cx="6" cy="3" r="1.1" fill="#111"/><circle cx="9.6" cy="3" r="1.1" fill="#111"/><path d="M7.6,6 H11.6 L9.6,8.2Z" fill="#111"/></svg></div>
<!-- RSI and volume labels -->
<div class="abs" style="left:19px;top:430.8px;width:116.4px;height:10.4px;background:#c3d6fa;border:0.6px solid #8fb0f0;box-sizing:border-box"></div>
<div class="abs" style="left:21.2px;top:433.2px;width:5.7px;height:5.6px;background:#000"></div>
<div class="t" style="left:29.4px;top:432.6px;font-size:6.45px;color:#111">Relative Strength Index (14)</div>
<div class="t" style="left:112.8px;top:432.6px;font-size:6.6px;color:#111">33.635</div>
<div class="abs" style="left:19px;top:476.6px;width:57.6px;height:11px;background:#c3d6fa;border:0.6px solid #8fb0f0;box-sizing:border-box"></div>
<div class="abs" style="left:21.4px;top:479.6px;width:2.8px;height:6px;background:#34c04a"></div><div class="abs" style="left:24.2px;top:479.6px;width:2.8px;height:6px;background:#e85a4a"></div>
<div class="t" style="left:29.4px;top:479.2px;font-size:6.4px;color:#111">Volume</div>
<div class="t" style="left:54.6px;top:479.2px;font-size:6.4px;color:#e8607a">9,960k</div>
<div id="bottombar" class="abs"><div class="abs" style="left:0;top:0;width:18.5px;height:15px;background:#5887e4"></div>
<svg class="abs" style="left:3px;top:1.5px" width="13" height="12" viewBox="0 0 13 12"><path d="M1,11 L3.4,2 L5,8 L7,4.6" fill="none" stroke="#7a2a6a" stroke-width="0.8"/><path d="M1.6,1.4 L8.6,10.6" stroke="#e02a2a" stroke-width="0.9"/><path d="M1.6,11 H6" stroke="#1fa83a" stroke-width="0.8"/><path d="M6,9.6 L10.6,1.4 L12.4,2.4 L7.8,10.6 L5.8,11.4Z" fill="#ffd84a" stroke="#b8922a" stroke-width="0.4"/></svg>
<svg class="abs" style="left:20px;top:2px" width="13" height="12" viewBox="0 0 13 12"><path d="M2.4,5.6 L8.6,2 M2.4,5.6 L8.6,9" stroke="#fff" stroke-width="1"/><circle cx="2.4" cy="5.6" r="1.7" fill="#fff"/><circle cx="8.8" cy="2" r="1.7" fill="#fff"/><circle cx="8.8" cy="9" r="1.7" fill="#fff"/><path d="M9,10 H12.4 L10.7,11.8Z" fill="#111"/></svg>
<div class="abs" style="left:34.5px;top:0.8px;width:40.2px;height:14.2px;background:#fbfbfd"></div>
<svg class="abs" style="left:36.5px;top:1.6px" width="12" height="12.4" viewBox="0 0 12 12.4"><defs><linearGradient id="bk1" x1="0" x2="1"><stop offset="0" stop-color="#163f86"/><stop offset="1" stop-color="#2f6ab8"/></linearGradient><linearGradient id="bk2" x1="0" x2="1"><stop offset="0" stop-color="#c8ccd4"/><stop offset="1" stop-color="#6a7484"/></linearGradient></defs><rect x="0.8" y="0.8" width="10.6" height="11" fill="#fdfdfd"/><rect x="0.8" y="0.8" width="3.8" height="11" fill="url(#bk1)"/><rect x="7.4" y="0.8" width="4" height="11" fill="url(#bk2)"/><rect x="3" y="2" width="1.6" height="8.6" fill="#fdfdfd"/><rect x="7.4" y="2" width="1.4" height="8.6" fill="#fdfdfd"/></svg>
<div class="t" style="left:51px;top:5.6px;font-size:6.35px;color:#111">Analyze</div>
<svg class="abs" style="left:78.5px;top:2px" width="12" height="12" viewBox="0 0 12 12"><path d="M0.8,0.8 H5.4 L6.8,2.2 V7 H0.8Z" fill="#e8effc" stroke="#9ab4e8" stroke-width="0.5"/><path d="M3,4 H10.8 V9 H6.4 L4.8,10.8 V9 H3Z" fill="#3f7fe0" stroke="#2a5fc0" stroke-width="0.4"/><path d="M5,6.4 H9" stroke="#cfe0ff" stroke-width="0.8" stroke-dasharray="0.9,0.7"/></svg>
<svg class="abs" style="left:92px;top:1.6px" width="13" height="13" viewBox="0 0 13 13"><rect x="0.8" y="0.8" width="7.6" height="6.4" fill="#f4f8ff" stroke="#2a5fc0" stroke-width="0.8"/><rect x="0.8" y="0.8" width="7.6" height="1.6" fill="#2a5fc0"/><rect x="4.2" y="4.6" width="8" height="7.2" fill="#fff" stroke="#2a5fc0" stroke-width="0.8"/><rect x="4.2" y="4.6" width="8" height="1.6" fill="#2a5fc0"/><path d="M5.2,10.4 L6.8,7.6 L8.4,10 L10,7.4 L11.4,9.4" fill="none" stroke="#e02a2a" stroke-width="0.7"/><path d="M5.2,8.6 L7,10 L9,8 L11.4,10.6" fill="none" stroke="#1fa83a" stroke-width="0.7"/></svg>
<div class="t" style="left:106.6px;top:2.6px;font-size:10px;color:#2a4890">«</div>
<div class="abs" style="left:116px;top:1.6px;width:10px;height:11.6px;background:#a9c5f8;border:0.5px solid #7fa2e8;box-sizing:border-box;border-radius:1px"></div>
<svg class="abs" style="left:118.6px;top:4.6px" width="5" height="6" viewBox="0 0 5 6"><path d="M4,0.4 L1,3 L4,5.6Z" fill="#111"/></svg>
<div class="abs" style="left:127px;top:1.4px;width:616px;height:12px;background:#5d90ee;border-top:0.6px solid #4d7cd8;border-bottom:0.6px solid #4d7cd8;box-sizing:border-box"></div>
<div class="abs" style="left:507.5px;top:1.8px;width:235px;height:11.2px;background:linear-gradient(#8ab2f8,#6f9ef2);border:0.5px solid #5584e0;box-sizing:border-box;border-radius:1px"></div>
<div class="abs" style="left:743.4px;top:1.6px;width:8.4px;height:11.6px;background:#a9c5f8;border:0.5px solid #7fa2e8;box-sizing:border-box;border-radius:1px"></div>
<svg class="abs" style="left:745.4px;top:4.6px" width="5" height="6" viewBox="0 0 5 6"><path d="M1,0.4 L4,3 L1,5.6Z" fill="#111"/></svg>
<svg class="abs" style="left:755.5px;top:1.4px" width="13" height="13" viewBox="0 0 13 13"><rect x="2.6" y="1.6" width="9.6" height="9" fill="#f4f6fa" stroke="#7a8aa8" stroke-width="0.5"/><rect x="2.6" y="1.6" width="9.6" height="2.4" fill="#e0403a"/><path d="M4,5.4 H11 M4,7 H11 M4,8.6 H11" stroke="#8aa0c8" stroke-width="0.6" stroke-dasharray="1,0.6"/><path d="M0.6,8.6 L4.2,5.8 V7.4 H9 V9.8 H4.2 V11.4Z" fill="#2fb44a" stroke="#1a8a30" stroke-width="0.4"/></svg>
<svg class="abs" style="left:774px;top:2.4px" width="11" height="11" viewBox="0 0 11 11"><path d="M2.6,4.4 H6.4 A3,3 0 0 1 6.4,10.2 H5" fill="none" stroke="#2f66d8" stroke-width="1.6"/><path d="M0.4,4.4 L4,1.4 V7.4Z" fill="#2f66d8"/></svg>
<svg class="abs" style="left:789.5px;top:2.4px" width="11" height="11" viewBox="0 0 11 11"><path d="M8.4,4.4 H4.6 A3,3 0 0 0 4.6,10.2 H6" fill="none" stroke="#7aa0ec" stroke-width="1.6"/><path d="M10.6,4.4 L7,1.4 V7.4Z" fill="#7aa0ec"/></svg>
<svg class="abs" style="left:805px;top:1.4px" width="12" height="13" viewBox="0 0 12 13"><rect x="5" y="1" width="6.4" height="6.6" rx="0.8" fill="#2fb44a" stroke="#1a7a2c" stroke-width="0.4"/><rect x="0.8" y="6" width="5.6" height="5.8" rx="0.8" fill="#e02a2a" stroke="#8a1a1a" stroke-width="0.4"/><path d="M2.4,9.6 L8.4,4" stroke="#f8f8f8" stroke-width="1.3"/><path d="M9.6,2.8 L9,5.6 L6.8,3.4Z" fill="#f8f8f8"/><circle cx="2.6" cy="9.4" r="1" fill="none" stroke="#f8f8f8" stroke-width="0.6"/></svg>
<svg class="abs" style="left:820px;top:1.8px" width="12" height="12" viewBox="0 0 12 12"><circle cx="4.6" cy="4.6" r="3.2" fill="#8ab0f4" stroke="#7a9ee8" stroke-width="1"/><path d="M7,7 L10.6,10.8" stroke="#7a9ee8" stroke-width="1.6"/><path d="M10.8,1 V6" stroke="#7a9ee8" stroke-width="0.8"/></svg>
<svg class="abs" style="left:835px;top:1.8px" width="13" height="12" viewBox="0 0 13 12"><circle cx="4.8" cy="4.6" r="3.4" fill="#fff" stroke="#111" stroke-width="1.1"/><path d="M7.4,7.2 L11.4,11" stroke="#111" stroke-width="1.8"/><path d="M3,4.6 H6.6" stroke="#111" stroke-width="1"/></svg>
<svg class="abs" style="left:851px;top:1.8px" width="13" height="12" viewBox="0 0 13 12"><circle cx="4.8" cy="4.6" r="3.4" fill="#fff" stroke="#111" stroke-width="1.1"/><path d="M7.4,7.2 L11.4,11" stroke="#111" stroke-width="1.8"/><circle cx="4.8" cy="4.6" r="1.6" fill="#2f66d8"/></svg>
<svg class="abs" style="left:867.5px;top:2.4px" width="12.5" height="11" viewBox="0 0 12.5 11"><rect x="0.4" y="0.8" width="12" height="2.6" fill="#c4d4f4"/><g fill="#222"><rect x="1" y="1.2" width="1.8" height="1.8"/><rect x="3.8" y="1.2" width="1.8" height="1.8"/><rect x="6.6" y="1.2" width="1.8" height="1.8"/><rect x="9.4" y="1.2" width="1.8" height="1.8"/></g><path d="M6.4,4.6 V8.6" stroke="#2f66d8" stroke-width="1.2"/><path d="M4.2,7.2 L6.4,9.8 L8.6,7.2Z" fill="#2f66d8"/></svg>
</div>
<div id="taskbar" class="abs"><div class="abs" style="left:0;top:0;width:880px;height:0.6px;background:#c9c9cc"></div>
<svg class="abs" style="left:11px;top:5.5px" width="17" height="16" viewBox="0 0 17 16"><circle cx="8.8" cy="8.2" r="6.2" fill="#f5a020"/><circle cx="6.4" cy="7.4" r="5" fill="#e1e1e2"/><path d="M1.2,6.4 A1.7,1.7 0 0 1 2.6,3.6 A2.5,2.5 0 0 1 7.2,3.6 A1.7,1.7 0 0 1 7.8,6.4 Z" fill="#bcd2f2"/><path d="M5.8,14.4 A1.7,1.7 0 0 1 7,11.6 A2.5,2.5 0 0 1 11.8,11.4 A1.7,1.7 0 0 1 12.8,14.4 Z" fill="#c4d8f6"/></svg>
<div class="t" style="left:30.6px;top:6.2px;font-size:7.4px;color:#222;transform:scaleX(0.83);transform-origin:left">12°C</div>
<div class="t" style="left:30.6px;top:15.6px;font-size:7.3px;color:#6a6a6a">Parc. Nublado</div>
<svg class="abs" style="left:273px;top:7.2px" width="14.4" height="14.4" viewBox="0 0 14.4 14.4"><rect x="0" y="0" width="6.8" height="6.8" fill="#2a8ae8"/><rect x="7.6" y="0" width="6.8" height="6.8" fill="#38a4f4"/><rect x="0" y="7.6" width="6.8" height="6.8" fill="#1f78dc"/><rect x="7.6" y="7.6" width="6.8" height="6.8" fill="#2a8ae8"/></svg>
<div class="abs" style="left:296px;top:5px;width:130px;height:18.6px;border-radius:9.2px;background:#f6f6f8;border:0.5px solid #d0d0d4;box-sizing:border-box"></div>
<svg class="abs" style="left:301.5px;top:9.6px" width="10" height="10" viewBox="0 0 10 10"><circle cx="4.2" cy="4.2" r="2.9" fill="none" stroke="#222" stroke-width="1"/><path d="M6.4,6.4 L9,9" stroke="#222" stroke-width="1.1"/></svg>
<div class="t" style="left:317.6px;top:11.2px;font-size:8px;color:#5a5a5a">Procurar</div>
<svg class="abs" style="left:434.5px;top:8px" width="14" height="14" viewBox="0 0 14 14"><rect x="4.4" y="0.8" width="9" height="8.6" rx="0.8" fill="#f2f2f2" stroke="#c8c8c8" stroke-width="0.4"/><rect x="0.6" y="3.6" width="9.2" height="9.4" rx="0.8" fill="#1e1e1e"/><rect x="3.4" y="3.6" width="6.4" height="6.4" fill="#e4e4e4"/></svg>
<svg class="abs" style="left:461.5px;top:7px" width="14.4" height="15" viewBox="0 0 14.4 15"><path d="M4.6,3.6 V2 A1,1 0 0 1 5.6,1 H8.8 A1,1 0 0 1 9.8,2 V3.6" fill="none" stroke="#2a7ad8" stroke-width="0.9"/><rect x="0.6" y="3.4" width="13.2" height="10.6" rx="1.8" fill="#1f5fb8"/><rect x="4.4" y="5.6" width="2.4" height="2.4" fill="#f25022"/><rect x="7.4" y="5.6" width="2.4" height="2.4" fill="#7fba00"/><rect x="4.4" y="8.6" width="2.4" height="2.4" fill="#00a4ef"/><rect x="7.4" y="8.6" width="2.4" height="2.4" fill="#ffb900"/></svg>
<svg class="abs" style="left:488.5px;top:7.4px" width="15" height="15" viewBox="0 0 15 15"><rect x="1" y="1" width="6.6" height="6.6" fill="none" stroke="#e03a2a" stroke-width="1" stroke-dasharray="1.4,0.9"/><path d="M6.6,4.4 L12.6,11.4 M12.2,5 L6.6,11.6" stroke="#8ab4ec" stroke-width="1"/><circle cx="6" cy="12.4" r="1.5" fill="none" stroke="#2a7ad8" stroke-width="0.9"/><circle cx="13" cy="12.4" r="1.5" fill="none" stroke="#2a7ad8" stroke-width="0.9"/></svg>
<svg class="abs" style="left:514px;top:7.6px" width="15.6" height="14" viewBox="0 0 15.6 14"><path d="M0.6,2 A1,1 0 0 1 1.6,1 H5.4 L7,2.6 H14 A1,1 0 0 1 15,3.6 V12 A1,1 0 0 1 14,13 H1.6 A1,1 0 0 1 0.6,12Z" fill="#f4b400"/><path d="M0.6,4.4 H15 V12 A1,1 0 0 1 14,13 H1.6 A1,1 0 0 1 0.6,12Z" fill="#ffd54a"/><rect x="4.6" y="8.6" width="6.6" height="4.4" fill="#2a7ad8"/><rect x="5.8" y="10.4" width="4.2" height="1.2" fill="#9ac4f4"/></svg>
<svg class="abs" style="left:540px;top:3.4px" width="19" height="20" viewBox="0 0 19 20"><circle cx="7.8" cy="11.6" r="6.8" fill="#fbbc04"/><path d="M7.8,11.6 L1.9,8.2 A6.8,6.8 0 0 1 13.7,8.2Z" fill="#ea4335"/><path d="M7.8,11.6 L1.9,8.2 A6.8,6.8 0 0 0 7.8,18.4 L11.2,12.6Z" fill="#34a853"/><path d="M1.9,8.2 A6.8,6.8 0 0 1 13.7,8.2 H7.8Z" fill="#ea4335"/><circle cx="7.8" cy="11.6" r="3.2" fill="#fff"/><circle cx="7.8" cy="11.6" r="2.5" fill="#4285f4"/><circle cx="13.8" cy="5.4" r="3.9" fill="#2a8ae0" stroke="#e1e1e2" stroke-width="0.6"/><text x="13.8" y="7.2" font-size="4.8" fill="#fff" text-anchor="middle" font-weight="bold" font-family="Liberation Sans, sans-serif">R</text></svg>
<div class="abs" style="left:546px;top:24.6px;width:3.6px;height:1.2px;background:#8a8a8e;border-radius:0.6px"></div>
<svg class="abs" style="left:567.5px;top:7.2px" width="14.6" height="14.6" viewBox="0 0 14.6 14.6"><rect x="0" y="0" width="14.6" height="14.6" fill="#f0642a"/><rect x="0" y="0" width="14.6" height="5" fill="#f48a3a"/><g fill="#fbd0b8"><rect x="2.6" y="7" width="1.4" height="4.4"/><rect x="5.2" y="5" width="1.4" height="4.6"/><rect x="7.8" y="6" width="1.4" height="4"/><rect x="10.4" y="2.8" width="1.4" height="4.6"/></g></svg>
<div class="abs" style="left:573px;top:24.6px;width:3.6px;height:1.2px;background:#8a8a8e;border-radius:0.6px"></div>
<svg class="abs" style="left:595px;top:8.4px" width="12.4" height="12.4" viewBox="0 0 12.4 12.4"><rect x="0" y="0" width="12.4" height="12.4" rx="1" fill="#0a0c10"/><g fill="#3f9ad6"><rect x="3" y="6" width="1.3" height="3.6"/><rect x="5.4" y="4.4" width="1.3" height="3.8"/><rect x="7.8" y="2.6" width="1.3" height="4.2"/></g></svg>
<div class="abs" style="left:599.4px;top:24.6px;width:3.6px;height:1.2px;background:#8a8a8e;border-radius:0.6px"></div>
<svg class="abs" style="left:700.5px;top:10.6px" width="8" height="6" viewBox="0 0 8 6"><path d="M1,4.6 L4,1.4 L7,4.6" fill="none" stroke="#333" stroke-width="0.9"/></svg>
<svg class="abs" style="left:718px;top:8.6px" width="12" height="9" viewBox="0 0 12 9"><path d="M2.8,7.6 A2.2,2.2 0 0 1 2.6,3.4 A3.2,3.2 0 0 1 8.6,3 A2.4,2.4 0 0 1 9,7.6Z" fill="#f0f0f2" stroke="#555" stroke-width="0.8"/></svg>
<svg class="abs" style="left:737.5px;top:7px" width="12" height="13" viewBox="0 0 12 13"><rect x="1" y="1" width="8.6" height="8.6" rx="2" fill="none" stroke="#666" stroke-width="0.8"/><path d="M3.2,4.6 A2.4,2.4 0 0 1 7.4,4 M7.4,6.4 A2.4,2.4 0 0 1 3.2,7" fill="none" stroke="#666" stroke-width="0.7"/><circle cx="8.8" cy="9.6" r="2.2" fill="#f59a1e"/></svg>
<div class="t" style="left:759px;top:10px;font-size:6.4px;color:#222">POR</div>
<svg class="abs" style="left:783.5px;top:8.6px" width="10" height="8.4" viewBox="0 0 10 8.4"><path d="M0.8,3 A6,6 0 0 1 9.2,3 M2.2,4.6 A4,4 0 0 1 7.8,4.6 M3.6,6.2 A2,2 0 0 1 6.4,6.2" fill="none" stroke="#222" stroke-width="0.8"/><circle cx="5" cy="7.4" r="0.7" fill="#222"/></svg>
<svg class="abs" style="left:797.5px;top:8px" width="11" height="9.6" viewBox="0 0 11 9.6"><path d="M0.8,3.4 H2.8 L5.4,1 V8.6 L2.8,6.2 H0.8Z" fill="none" stroke="#222" stroke-width="0.8"/><path d="M6.8,3.2 A2.2,2.2 0 0 1 6.8,6.4 M8,2 A4,4 0 0 1 8,7.6 M9.2,1 A5.6,5.6 0 0 1 9.2,8.6" fill="none" stroke="#222" stroke-width="0.7"/></svg>
<svg class="abs" style="left:812px;top:8.6px" width="11.4" height="8.4" viewBox="0 0 11.4 8.4"><rect x="0.6" y="2" width="9.2" height="5.4" rx="1.2" fill="#222"/><rect x="9.8" y="3.6" width="1.2" height="2.2" fill="#222"/><path d="M2.6,2.2 L4.2,0.4 L5,2 L6.6,0.6 L6.2,2.2Z" fill="#222"/></svg>
<div class="t" style="left:832px;top:6.2px;width:37.4px;text-align:right;font-size:7px;color:#222">18:54</div>
<div class="t" style="left:832px;top:15.6px;width:37.4px;text-align:right;font-size:7px;color:#222">11/12/2025</div>
</div>
<div class="abs" style="left:0;top:0;width:1.2px;height:521px;background:#3a68cc"></div>
</body></html>
